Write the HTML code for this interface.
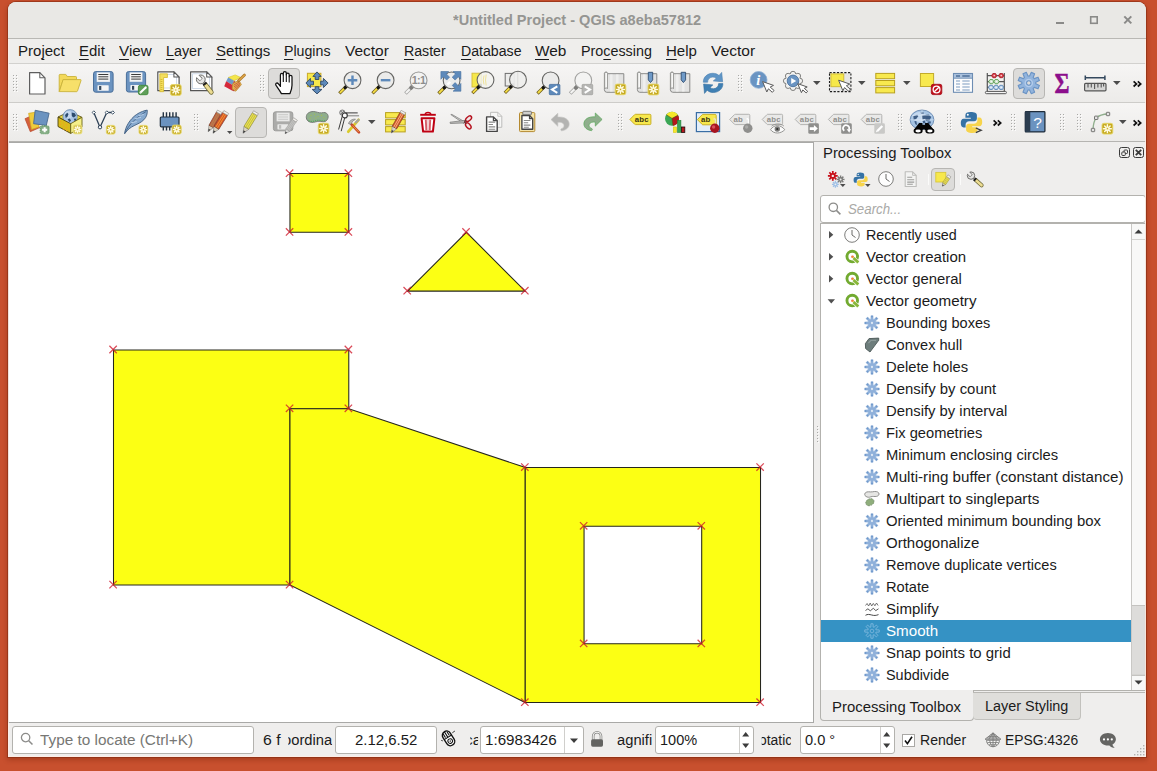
<!DOCTYPE html>
<html><head><meta charset="utf-8"><title>QGIS</title><style>
html,body{margin:0;padding:0}
body{width:1157px;height:771px;overflow:hidden;position:relative;background:#c8502e;font-family:"Liberation Sans", sans-serif}
.t{position:absolute;white-space:pre;line-height:20px;height:20px;transform-origin:0 50%}
u{text-decoration:none;border-bottom:1.3px solid #1b1b1b;padding-bottom:0px}
</style></head><body>
<div style="position:absolute;left:8px;top:2px;width:1138px;height:755px;background:#efeeed;border-radius:8px 8px 0 0;box-shadow:0 0 0 1px rgba(120,35,10,.45),0 2px 5px 1px rgba(100,25,0,.32);overflow:hidden"></div>
<div style="position:absolute;left:8px;top:2px;width:1138px;height:36px;background:#e9e8e5;border-radius:8px 8px 0 0;border-bottom:1px solid #b9b8b4"></div>
<svg style="position:absolute;left:1050px;top:8px" width="90" height="24" viewBox="0 0 90 24"><g stroke="#8a8a88" stroke-width="2" fill="none"><path d="M6 15h8"/><rect x="40.700" y="8.800" width="6.500" height="6.500" stroke-width="1.600"/><path d="M74.300 8.400l7 7M81.300 8.400l-7 7"/></g></svg>
<div style="position:absolute;left:8px;top:39px;width:1138px;height:24px;background:#efeeec;border-bottom:1px solid #d2d1ce"></div>
<div style="position:absolute;left:8px;top:64px;width:1138px;height:38px;background:linear-gradient(#f6f5f4,#ecebe9);border-bottom:1px solid #cdccc9"></div>
<div style="position:absolute;left:8px;top:103px;width:1138px;height:38px;background:linear-gradient(#f6f5f4,#ecebe9)"></div>
<div style="position:absolute;left:8px;top:141px;width:806px;height:582px;background:#a9a9a7"></div>
<div style="position:absolute;left:9px;top:143px;width:804px;height:579px;background:#fff"></div>
<svg style="position:absolute;left:9px;top:143px" width="804" height="579" viewBox="0 0 804 579"><path d="M280.96 30.56 L339.78 30.56 L339.78 89.34 L280.96 89.34 Z" fill="#fcff14" fill-rule="evenodd" stroke="#26261c" stroke-width="1.05"/><path d="M398.60 148.12 L457.42 89.34 L516.24 148.12 Z" fill="#fcff14" fill-rule="evenodd" stroke="#26261c" stroke-width="1.05"/><path d="M104.50 206.90 L339.78 206.90 L339.78 265.68 L280.96 265.68 L280.96 442.02 L104.50 442.02 Z" fill="#fcff14" fill-rule="evenodd" stroke="#26261c" stroke-width="1.05"/><path d="M280.96 265.68 L339.78 265.68 L516.24 324.46 L516.24 559.58 L280.96 442.02 Z" fill="#fcff14" fill-rule="evenodd" stroke="#26261c" stroke-width="1.05"/><path d="M516.24 324.46 L751.52 324.46 L751.52 559.58 L516.24 559.58 Z M575.06 383.24 L692.70 383.24 L692.70 500.80 L575.06 500.80 Z" fill="#fcff14" fill-rule="evenodd" stroke="#26261c" stroke-width="1.05"/><path d="M100.40 202.80l7.4 7.4M107.80 202.80l-7.4 7.4M100.40 437.92l7.4 7.4M107.80 437.92l-7.4 7.4M276.86 26.46l7.4 7.4M284.26 26.46l-7.4 7.4M276.86 85.24l7.4 7.4M284.26 85.24l-7.4 7.4M276.86 261.58l7.4 7.4M284.26 261.58l-7.4 7.4M276.86 437.92l7.4 7.4M284.26 437.92l-7.4 7.4M335.68 26.46l7.4 7.4M343.08 26.46l-7.4 7.4M335.68 85.24l7.4 7.4M343.08 85.24l-7.4 7.4M335.68 202.80l7.4 7.4M343.08 202.80l-7.4 7.4M335.68 261.58l7.4 7.4M343.08 261.58l-7.4 7.4M394.50 144.02l7.4 7.4M401.90 144.02l-7.4 7.4M453.32 85.24l7.4 7.4M460.72 85.24l-7.4 7.4M512.14 144.02l7.4 7.4M519.54 144.02l-7.4 7.4M512.14 320.36l7.4 7.4M519.54 320.36l-7.4 7.4M512.14 555.48l7.4 7.4M519.54 555.48l-7.4 7.4M570.96 379.14l7.4 7.4M578.36 379.14l-7.4 7.4M570.96 496.70l7.4 7.4M578.36 496.70l-7.4 7.4M688.60 379.14l7.4 7.4M696.00 379.14l-7.4 7.4M688.60 496.70l7.4 7.4M696.00 496.70l-7.4 7.4M747.42 320.36l7.4 7.4M754.82 320.36l-7.4 7.4M747.42 555.48l7.4 7.4M754.82 555.48l-7.4 7.4" stroke="#cf1a2c" stroke-opacity=".78" stroke-width="1.25" fill="none"/></svg>
<svg style="position:absolute;left:1118px;top:146px" width="28" height="14" viewBox="0 0 28 14"><g fill="none" stroke="#3a3a3a" stroke-width="1"><rect x="1.5" y="1.5" width="10" height="10" rx="2"/><rect x="15.5" y="1.5" width="10" height="10" rx="2"/><rect x="6" y="4" width="3.5" height="3.5" rx=".8"/><rect x="3.8" y="6" width="3.5" height="3.5" rx=".8" fill="#efeeed"/><path d="M17.8 3.8l5.4 5.4M23.2 3.8l-5.4 5.4" stroke-width="1.8"/></g></svg>
<div style="position:absolute;left:820px;top:195px;width:324px;height:26px;background:#fff;border:1px solid #b3b2ae;border-radius:3px"></div>
<svg style="position:absolute;left:827px;top:201px" width="16" height="16" viewBox="0 0 16 16"><circle cx="6.3" cy="6.3" r="4.2" fill="none" stroke="#8c8c8a" stroke-width="1.3"/><path d="M9.4 9.4l4 4" stroke="#8c8c8a" stroke-width="1.5"/></svg>
<div style="position:absolute;left:820px;top:223px;width:324px;height:466px;background:#fff;border:1px solid #b3b2ae"></div>
<div style="position:absolute;left:821px;top:620px;width:310px;height:22px;background:#3592c4"></div>
<div style="position:absolute;left:1131px;top:224px;width:14px;height:466px;background:#f8f8f7;border-left:1px solid #c9c8c5;width:13px"></div>
<div style="position:absolute;left:1132px;top:605px;width:13px;height:71px;background:#dddcda;border-top:1px solid #c4c3c0;border-bottom:1px solid #c4c3c0;height:69px"></div>
<svg style="position:absolute;left:1132px;top:224px" width="13" height="466" viewBox="0 0 13 466"><path d="M2.5 9.5h8L6.5 5.5z M2.5 456.5h8l-4 4z" fill="#3c3c3c"/><path d="M0 15.5h13M0 450.5h13" stroke="#d5d4d1"/></svg>
<svg style="position:absolute;left:0;top:0" width="1157" height="771" viewBox="0 0 1157 771"><path d="M829 231.1l4.300 3.700l-4.300 3.700zM829 253.1l4.300 3.700l-4.300 3.700zM829 275.1l4.300 3.700l-4.300 3.700zM827.600 299.200h7.400l-3.700 4.200z" fill="#505050"/></svg>
<div style="position:absolute;left:820px;top:690px;width:153px;height:31px;background:#efeeed;border:1px solid #b3b2ae;border-top:none;border-radius:0 0 4px 4px;height:30px;width:152px"></div>
<div style="position:absolute;left:973px;top:692px;width:108px;height:27px;background:#dfdedb;border:1px solid #c2c1bd;border-top:1px solid #b9b8b4;border-left:none;border-radius:0 0 4px 4px;width:107px;height:26px"></div>
<div style="position:absolute;left:12px;top:726px;width:240px;height:26px;background:#fff;border:1px solid #b3b2ae;border-radius:3px"></div>
<svg style="position:absolute;left:19px;top:731px" width="16" height="16" viewBox="0 0 16 16"><circle cx="6.6" cy="6.6" r="4.2" fill="none" stroke="#8c8c8a" stroke-width="1.3"/><path d="M9.7 9.7l3.8 3.8" stroke="#8c8c8a" stroke-width="1.5"/></svg>
<div style="position:absolute;left:335px;top:726px;width:100px;height:26px;background:#fff;border:1px solid #b3b2ae;border-radius:3px"></div>
<div style="position:absolute;left:480px;top:726px;width:102px;height:26px;background:#fff;border:1px solid #b3b2ae;border-radius:3px"></div>
<div style="position:absolute;left:564px;top:727px;width:1px;height:26px;background:#d0cfcc"></div>
<svg style="position:absolute;left:568px;top:734px" width="12" height="12" viewBox="0 0 12 12"><path d="M2 4.5h8l-4 4.5z" fill="#3c3c3c"/></svg>
<div style="position:absolute;left:655px;top:726px;width:97px;height:26px;background:#fff;border:1px solid #b3b2ae;border-radius:3px"></div>
<div style="position:absolute;left:739px;top:727px;width:1px;height:26px;background:#d0cfcc"></div>
<div style="position:absolute;left:800px;top:726px;width:93px;height:26px;background:#fff;border:1px solid #b3b2ae;border-radius:3px"></div>
<div style="position:absolute;left:880px;top:727px;width:1px;height:26px;background:#d0cfcc"></div>
<svg style="position:absolute;left:740px;top:727px" width="12" height="26" viewBox="0 0 12 26"><path d="M2.2 9.5h7L5.7 5z M2.2 16.5h7l-3.5 4.5z" fill="#3c3c3c"/></svg>
<svg style="position:absolute;left:881px;top:727px" width="12" height="26" viewBox="0 0 12 26"><path d="M2.2 9.5h7L5.7 5z M2.2 16.5h7l-3.5 4.5z" fill="#3c3c3c"/></svg>
<div style="position:absolute;left:902px;top:734px;width:11px;height:11px;background:#fff;border:1px solid #a9a8a5"></div>
<svg style="position:absolute;left:902px;top:734px" width="13" height="13" viewBox="0 0 13 13"><path d="M3 6.5l2.4 3.2L10 2.8" fill="none" stroke="#111" stroke-width="1.6"/></svg>
<svg style="position:absolute;left:1132.3px;top:743.4px" width="14" height="14" viewBox="0 0 14 14"><g fill="#b3b2af"><rect x="11" y="2" width="1.4" height="1.4"/><rect x="8" y="5" width="1.4" height="1.4"/><rect x="11" y="5" width="1.4" height="1.4"/><rect x="5" y="8" width="1.4" height="1.4"/><rect x="8" y="8" width="1.4" height="1.4"/><rect x="11" y="8" width="1.4" height="1.4"/><rect x="2" y="11" width="1.4" height="1.4"/><rect x="5" y="11" width="1.4" height="1.4"/><rect x="8" y="11" width="1.4" height="1.4"/><rect x="11" y="11" width="1.4" height="1.4"/></g></svg>
<div style="position:absolute;left:268px;top:68px;width:30px;height:29px;background:#dddcda;border:1px solid #b7b6b3;border-radius:4px"></div>
<div style="position:absolute;left:1013px;top:68px;width:30px;height:29px;background:#dddcda;border:1px solid #b7b6b3;border-radius:4px"></div>
<div style="position:absolute;left:235px;top:107px;width:30px;height:29px;background:#dddcda;border:1px solid #b7b6b3;border-radius:4px"></div>
<svg style="position:absolute;left:0;top:0" width="1157" height="771" viewBox="0 0 1157 771" shape-rendering="crispEdges"><rect x="14" y="76" width="1" height="1" fill="#fff" fill-opacity=".85"/><rect x="13" y="75" width="1" height="1" fill="#a9a9a7"/><rect x="17" y="76" width="1" height="1" fill="#fff" fill-opacity=".85"/><rect x="16" y="75" width="1" height="1" fill="#a9a9a7"/><rect x="14" y="79" width="1" height="1" fill="#fff" fill-opacity=".85"/><rect x="13" y="78" width="1" height="1" fill="#a9a9a7"/><rect x="17" y="79" width="1" height="1" fill="#fff" fill-opacity=".85"/><rect x="16" y="78" width="1" height="1" fill="#a9a9a7"/><rect x="14" y="82" width="1" height="1" fill="#fff" fill-opacity=".85"/><rect x="13" y="81" width="1" height="1" fill="#a9a9a7"/><rect x="17" y="82" width="1" height="1" fill="#fff" fill-opacity=".85"/><rect x="16" y="81" width="1" height="1" fill="#a9a9a7"/><rect x="14" y="85" width="1" height="1" fill="#fff" fill-opacity=".85"/><rect x="13" y="84" width="1" height="1" fill="#a9a9a7"/><rect x="17" y="85" width="1" height="1" fill="#fff" fill-opacity=".85"/><rect x="16" y="84" width="1" height="1" fill="#a9a9a7"/><rect x="14" y="88" width="1" height="1" fill="#fff" fill-opacity=".85"/><rect x="13" y="87" width="1" height="1" fill="#a9a9a7"/><rect x="17" y="88" width="1" height="1" fill="#fff" fill-opacity=".85"/><rect x="16" y="87" width="1" height="1" fill="#a9a9a7"/><rect x="14" y="91" width="1" height="1" fill="#fff" fill-opacity=".85"/><rect x="13" y="90" width="1" height="1" fill="#a9a9a7"/><rect x="17" y="91" width="1" height="1" fill="#fff" fill-opacity=".85"/><rect x="16" y="90" width="1" height="1" fill="#a9a9a7"/></svg>
<svg style="position:absolute;left:0;top:0" width="1157" height="771" viewBox="0 0 1157 771" shape-rendering="crispEdges"><rect x="261" y="76" width="1" height="1" fill="#fff" fill-opacity=".85"/><rect x="260" y="75" width="1" height="1" fill="#a9a9a7"/><rect x="264" y="76" width="1" height="1" fill="#fff" fill-opacity=".85"/><rect x="263" y="75" width="1" height="1" fill="#a9a9a7"/><rect x="261" y="79" width="1" height="1" fill="#fff" fill-opacity=".85"/><rect x="260" y="78" width="1" height="1" fill="#a9a9a7"/><rect x="264" y="79" width="1" height="1" fill="#fff" fill-opacity=".85"/><rect x="263" y="78" width="1" height="1" fill="#a9a9a7"/><rect x="261" y="82" width="1" height="1" fill="#fff" fill-opacity=".85"/><rect x="260" y="81" width="1" height="1" fill="#a9a9a7"/><rect x="264" y="82" width="1" height="1" fill="#fff" fill-opacity=".85"/><rect x="263" y="81" width="1" height="1" fill="#a9a9a7"/><rect x="261" y="85" width="1" height="1" fill="#fff" fill-opacity=".85"/><rect x="260" y="84" width="1" height="1" fill="#a9a9a7"/><rect x="264" y="85" width="1" height="1" fill="#fff" fill-opacity=".85"/><rect x="263" y="84" width="1" height="1" fill="#a9a9a7"/><rect x="261" y="88" width="1" height="1" fill="#fff" fill-opacity=".85"/><rect x="260" y="87" width="1" height="1" fill="#a9a9a7"/><rect x="264" y="88" width="1" height="1" fill="#fff" fill-opacity=".85"/><rect x="263" y="87" width="1" height="1" fill="#a9a9a7"/><rect x="261" y="91" width="1" height="1" fill="#fff" fill-opacity=".85"/><rect x="260" y="90" width="1" height="1" fill="#a9a9a7"/><rect x="264" y="91" width="1" height="1" fill="#fff" fill-opacity=".85"/><rect x="263" y="90" width="1" height="1" fill="#a9a9a7"/></svg>
<svg style="position:absolute;left:0;top:0" width="1157" height="771" viewBox="0 0 1157 771" shape-rendering="crispEdges"><rect x="739" y="76" width="1" height="1" fill="#fff" fill-opacity=".85"/><rect x="738" y="75" width="1" height="1" fill="#a9a9a7"/><rect x="742" y="76" width="1" height="1" fill="#fff" fill-opacity=".85"/><rect x="741" y="75" width="1" height="1" fill="#a9a9a7"/><rect x="739" y="79" width="1" height="1" fill="#fff" fill-opacity=".85"/><rect x="738" y="78" width="1" height="1" fill="#a9a9a7"/><rect x="742" y="79" width="1" height="1" fill="#fff" fill-opacity=".85"/><rect x="741" y="78" width="1" height="1" fill="#a9a9a7"/><rect x="739" y="82" width="1" height="1" fill="#fff" fill-opacity=".85"/><rect x="738" y="81" width="1" height="1" fill="#a9a9a7"/><rect x="742" y="82" width="1" height="1" fill="#fff" fill-opacity=".85"/><rect x="741" y="81" width="1" height="1" fill="#a9a9a7"/><rect x="739" y="85" width="1" height="1" fill="#fff" fill-opacity=".85"/><rect x="738" y="84" width="1" height="1" fill="#a9a9a7"/><rect x="742" y="85" width="1" height="1" fill="#fff" fill-opacity=".85"/><rect x="741" y="84" width="1" height="1" fill="#a9a9a7"/><rect x="739" y="88" width="1" height="1" fill="#fff" fill-opacity=".85"/><rect x="738" y="87" width="1" height="1" fill="#a9a9a7"/><rect x="742" y="88" width="1" height="1" fill="#fff" fill-opacity=".85"/><rect x="741" y="87" width="1" height="1" fill="#a9a9a7"/><rect x="739" y="91" width="1" height="1" fill="#fff" fill-opacity=".85"/><rect x="738" y="90" width="1" height="1" fill="#a9a9a7"/><rect x="742" y="91" width="1" height="1" fill="#fff" fill-opacity=".85"/><rect x="741" y="90" width="1" height="1" fill="#a9a9a7"/></svg>
<svg style="position:absolute;left:25px;top:71px;overflow:visible" width="24" height="24" viewBox="0 0 24 24"><path d="M4.6 1.6h10.2l5.2 5.2v16.2h-15.4z" fill="#fff" stroke="#5e5e5e" stroke-width="1.2" stroke-linejoin="round"/><path d="M14.8 1.6v5.2h5.2" fill="none" stroke="#5e5e5e" stroke-width="1.02" stroke-linejoin="round"/></svg>
<svg style="position:absolute;left:58px;top:71px;overflow:visible" width="24" height="24" viewBox="0 0 24 24"><path d="M1.2 20.5V4.2q0-.8.8-.8h5.4q.7 0 1 .6l.7 1.5h8.6q.8 0 .8.8v2.2H5.2L1.2 20.5z" fill="#f3d95a" stroke="#c9b23a" stroke-width=".9" stroke-linejoin="round"/><path d="M1.3 20.6L5.1 8.6h17.3q.9 0 .6.9l-3.5 10.4q-.3.8-1.1.8z" fill="#f7e06a" stroke="#c9b23a" stroke-width=".9" stroke-linejoin="round"/></svg>
<svg style="position:absolute;left:91px;top:71px;overflow:visible" width="24" height="24" viewBox="0 0 24 24"><rect x="2.5" y="0.6" width="19.6" height="20.6" rx="2.2" fill="#6b93c0" stroke="#4a6f9a" stroke-width="1"/><rect x="5.7" y="1.4" width="13.200000000000001" height="9.48" fill="#f4f4f4"/><path d="M7.3 3.5h10.000000000000002M7.3 5.8h10.000000000000002M7.3 8.1h10.000000000000002" stroke="#3a3a3a" stroke-width="1"/><rect x="6.5" y="14.20" width="11.200000000000001" height="5.56" rx=".6" fill="#f4f4f4"/><rect x="8.1" y="15.02" width="2.2" height="3.91" fill="#34465a"/></svg>
<svg style="position:absolute;left:124px;top:71px;overflow:visible" width="24" height="24" viewBox="0 0 24 24"><rect x="2.4" y="0.6" width="19.2" height="20.4" rx="2.2" fill="#6b93c0" stroke="#4a6f9a" stroke-width="1"/><rect x="5.6" y="1.4" width="12.799999999999999" height="9.38" fill="#f4f4f4"/><path d="M7.199999999999999 3.5h9.6M7.199999999999999 5.8h9.6M7.199999999999999 8.1h9.6" stroke="#3a3a3a" stroke-width="1"/><rect x="6.4" y="14.06" width="10.799999999999999" height="5.51" rx=".6" fill="#f4f4f4"/><rect x="8.0" y="14.88" width="2.2" height="3.88" fill="#34465a"/><rect x="14.4" y="14.3" width="9.6" height="9.4" rx="1.8" fill="#5f9e58" stroke="#3f8a3a" stroke-width=".9"/><path d="M16.5 21.6l5.2-5.2" stroke="#fff" stroke-width="2.1" stroke-linecap="round"/><path d="M16 22.2l.4-1.500 1.100 1.100z" fill="#dfe9dd"/></svg>
<svg style="position:absolute;left:157px;top:71px;overflow:visible" width="24" height="24" viewBox="0 0 24 24"><path d="M0.8 0.9h16.1l5.2 5.2v13.600000000000001h-21.3z" fill="#fff" stroke="#555" stroke-width="1.2" stroke-linejoin="round"/><rect x="3.600" y="3.600" width="15.800" height="13.400" fill="none" stroke="#c5d3e4" stroke-width=".8"/><path d="M16.900000000000002 0.9v5.2h5.2z" fill="#fff" stroke="#555" stroke-width="1.02" stroke-linejoin="round"/><path d="M2.8 2.800h7.600v3.700h-3.800v14.200h-3.800z" fill="#f5df5e" stroke="#d3b92f" stroke-width=".8"/><path d="M3.600 8.500h1.800M3.600 10.500h1.800M3.600 12.500h1.800M3.600 14.500h1.800M3.600 16.500h1.800M3.600 18.500h1.800" stroke="#c9ab25" stroke-width=".7"/><rect x="13.4" y="13.6" width="10.8" height="10.8" rx="1.8" fill="#c6aa22" stroke="#e6d768" stroke-width=".9"/><path d="M19.90 19.00L22.69 19.00M19.58 19.78L21.55 21.75M18.80 20.10L18.80 22.89M18.02 19.78L16.05 21.75M17.70 19.00L14.91 19.00M18.02 18.22L16.05 16.25M18.80 17.90L18.80 15.11M19.58 18.22L21.55 16.25" stroke="#fffbe0" stroke-width="1.5" stroke-linecap="round"/><circle cx="18.8" cy="19.0" r="1.1" fill="#c6aa22" stroke="#fffbe0" stroke-width=".7"/></svg>
<svg style="position:absolute;left:190px;top:71px;overflow:visible" width="24" height="24" viewBox="0 0 24 24"><path d="M0.6 0.9h16.1l5.2 5.2v13.600000000000001h-21.3z" fill="#fff" stroke="#555" stroke-width="1.2" stroke-linejoin="round"/><rect x="2.600" y="2.800" width="16.800" height="14.800" fill="none" stroke="#c3d1e3" stroke-width=".8"/><path d="M16.700000000000003 0.9v5.2h5.2z" fill="#fff" stroke="#555" stroke-width="1.02" stroke-linejoin="round"/><path d="M15.48 13.74L21.30 21.30" stroke="#6f6a3a" stroke-width="4.7" stroke-linecap="round"/><path d="M15.48 13.74L21.30 21.30" stroke="#ecdc92" stroke-width="3.2" stroke-linecap="round"/><path d="M13.29 10.89L14.26 12.16" stroke="#9a9a98" stroke-width="3.6"/><path d="M14.26 12.16L15.48 13.74" stroke="#1f1f1f" stroke-width="4.4"/><circle cx="10.8" cy="8.4" r="4.4" fill="#e6e6e5" stroke="#6c6c6a" stroke-width="1"/><path d="M11.22 8.82L8.04 5.64" stroke="#6c6c6a" stroke-width="4.2"/><path d="M10.87 8.47L6.63 4.23" stroke="#fff" stroke-width="2.7"/></svg>
<svg style="position:absolute;left:223px;top:71px;overflow:visible" width="24" height="24" viewBox="0 0 24 24"><path d="M5.200 6.500l7-2.600 5.600 2.600-6.800 3.200z" fill="#f4e64a" stroke="#d8c62c" stroke-width=".6"/><path d="M3.200 10.200l2-3.700 5.800 3.200-1.600 4.200z" fill="#6f9ac8"/><path d="M1.200 15.200l2-5 6.200 3.700-.4 5.600z" fill="#d5283a"/><path d="M9 19.500l.4-5.600 1.600-4.200 1.800 1.200-1.400 9.600z" fill="#c23b3b"/><path d="M9.600 12.800l6.200-3.600 2.600 4.400-5.600 6.600-3.600-2.200z" fill="#e3b451" stroke="#b98a2c" stroke-width=".7"/><path d="M10.600 14.200l5.700-3.300M11 15.800l6.100-3.800M11.600 17.300l5.600-4M12.300 18.800l4.800-4.200" stroke="#c9503a" stroke-width=".8"/><path d="M15.600 9.800l5.900-5.700" stroke="#b07a2a" stroke-width="2.800" stroke-linecap="round"/><path d="M16 9.400l5.500-5.300" stroke="#e2a94a" stroke-width="1.300" stroke-linecap="round"/></svg>
<svg style="position:absolute;left:271px;top:71px;overflow:visible" width="24" height="24" viewBox="0 0 24 24"><path d="M10.400 22.600c-1.400-2.600-3.600-5.600-5.400-8.200-1.200-1.900 1-3.300 2.400-1.600l2 2.600V3.900c0-2 2.900-2 2.900 0V2.200c0-2.100 3-2.100 3 0v1.500c0-2 2.900-2 2.900 0v2c0-1.900 2.800-1.900 2.800 0v8.600c0 3.100-.9 5.600-2 8.300z" fill="#fff" stroke="#111" stroke-width="1.250" stroke-linejoin="round"/><path d="M12.300 4v7M15.300 3.600V11M18.200 5.600V11.400" stroke="#111" stroke-width="1.100"/></svg>
<svg style="position:absolute;left:305px;top:71px;overflow:visible" width="24" height="24" viewBox="0 0 24 24"><rect x="2.400" y="2.300" width="13.500" height="13.300" fill="#f6e84a" stroke="#c9a92a" stroke-width="1"/><g fill="#5d89ba" stroke="#2f4763" stroke-width=".9" stroke-linejoin="round"><path d="M12 .9l4.100 4.500h-2.200v3.100h-3.700V5.400H7.900z"/><path d="M12 22.900l4.900-4.500h-3v-2.700h-3.700v2.700h-3z"/><path d="M.9 12l4.500-4.600v2.800h3.100v3.600H5.400v2.800z"/><path d="M23.100 12l-4.700-4.600v2.800h-2.700v3.600h2.700v2.800z"/></g></svg>
<svg style="position:absolute;left:338px;top:71px;overflow:visible" width="24" height="24" viewBox="0 0 24 24"><path d="M8.56 15.14L1.36 22.34" stroke="#6b5a1a" stroke-width="3.3" stroke-linecap="butt"/><path d="M7.96 15.74L1.86 21.84" stroke="#f4dc45" stroke-width="1.9" stroke-linecap="butt"/><path d="M9.46 14.24L6.96 16.74" stroke="#141414" stroke-width="3.1" stroke-linecap="round"/><circle cx="14.5" cy="9.2" r="8.4" fill="#ebebea" stroke="#666664" stroke-width="1.1"/><path d="M14.500 4.400v9.600M9.700 9.200h9.600" stroke="#5d89ba" stroke-width="2.400"/></svg>
<svg style="position:absolute;left:371px;top:71px;overflow:visible" width="24" height="24" viewBox="0 0 24 24"><path d="M8.66 15.14L1.46 22.34" stroke="#6b5a1a" stroke-width="3.3" stroke-linecap="butt"/><path d="M8.06 15.74L1.96 21.84" stroke="#f4dc45" stroke-width="1.9" stroke-linecap="butt"/><path d="M9.56 14.24L7.06 16.74" stroke="#141414" stroke-width="3.1" stroke-linecap="round"/><circle cx="14.6" cy="9.2" r="8.4" fill="#ebebea" stroke="#666664" stroke-width="1.1"/><path d="M9.800 9.200h9.600" stroke="#5d89ba" stroke-width="2.400"/></svg>
<svg style="position:absolute;left:404px;top:71px;overflow:visible" width="24" height="24" viewBox="0 0 24 24"><path d="M8.66 15.34L1.46 22.54" stroke="#a4a4a2" stroke-width="3.6"/><path d="M8.06 15.94L1.96 22.04" stroke="#f4f4f3" stroke-width="2.2"/><path d="M9.56 14.44L7.06 16.94" stroke="#7d7d7b" stroke-width="3.8" stroke-linecap="round"/><circle cx="14.6" cy="9.4" r="8.4" fill="#f3f3f2" stroke="#9a9a98" stroke-width="1.1"/><text x="14.500" y="13.300" font-family="Liberation Sans,sans-serif" font-weight="bold" font-size="10.800" text-anchor="middle" fill="#8e8e8c" letter-spacing="-.7">1:1</text></svg>
<svg style="position:absolute;left:437px;top:71px;overflow:visible" width="24" height="24" viewBox="0 0 24 24"><path d="M8.66 15.34L1.46 22.54" stroke="#6b5a1a" stroke-width="3.3" stroke-linecap="butt"/><path d="M8.06 15.94L1.96 22.04" stroke="#f4dc45" stroke-width="1.9" stroke-linecap="butt"/><path d="M9.56 14.44L7.06 16.94" stroke="#141414" stroke-width="3.1" stroke-linecap="round"/><circle cx="14.6" cy="9.4" r="8.4" fill="#ececeb" stroke="#666664" stroke-width="1.1"/><g fill="#5d89ba" stroke="#46709f" stroke-width=".6" stroke-linejoin="round"><path d="M3.900.5h7.800L9.300 2.900l3.300 3.300-2.900 2.900-3.300-3.300-2.500 2.500z"/><path d="M23.900.5h-7.800l2.400 2.400-3.300 3.300 2.900 2.900 3.300-3.300 2.500 2.500z"/><path d="M23.900 20.200h-7.800l2.400-2.400-3.300-3.300 2.900-2.900 3.300 3.300 2.500-2.500z"/></g><path d="M10.400 13.600l2.800-2.800" stroke="#fff" stroke-width="2.600" stroke-opacity=".9"/></svg>
<svg style="position:absolute;left:470px;top:71px;overflow:visible" width="24" height="24" viewBox="0 0 24 24"><rect x="2" y="2.200" width="9.500" height="13.800" fill="#f6e84a" stroke="#d3bb3a" stroke-width=".9"/><path d="M9.56 14.94L2.36 22.14" stroke="#6b5a1a" stroke-width="3.3" stroke-linecap="butt"/><path d="M8.96 15.54L2.86 21.64" stroke="#f4dc45" stroke-width="1.9" stroke-linecap="butt"/><path d="M10.46 14.04L7.96 16.54" stroke="#141414" stroke-width="3.1" stroke-linecap="round"/><circle cx="15.5" cy="9" r="8.4" fill="rgba(243,243,240,.86)" stroke="#666664" stroke-width="1.1"/><path d="M14 4.500q-1.500 4.500 0 9M16.200 3.500q-1.400 5.500 0 11" stroke="#efe39a" stroke-width="1" fill="none"/></svg>
<svg style="position:absolute;left:503px;top:71px;overflow:visible" width="24" height="24" viewBox="0 0 24 24"><rect x="2.200" y="2.400" width="9" height="12.600" fill="#ececeb" stroke="#6e6e6e" stroke-width="1"/><path d="M9.06 14.64L1.86 21.84" stroke="#6b5a1a" stroke-width="3.3" stroke-linecap="butt"/><path d="M8.46 15.24L2.36 21.34" stroke="#f4dc45" stroke-width="1.9" stroke-linecap="butt"/><path d="M9.96 13.74L7.46 16.24" stroke="#141414" stroke-width="3.1" stroke-linecap="round"/><circle cx="15" cy="8.7" r="8.4" fill="rgba(238,238,237,.94)" stroke="#666664" stroke-width="1.1"/><path d="M14.800 1v15.400" stroke="#dcdcdb" stroke-width="1"/></svg>
<svg style="position:absolute;left:536px;top:71px;overflow:visible" width="24" height="24" viewBox="0 0 24 24"><path d="M8.66 15.34L1.46 22.54" stroke="#6b5a1a" stroke-width="3.3" stroke-linecap="butt"/><path d="M8.06 15.94L1.96 22.04" stroke="#f4dc45" stroke-width="1.9" stroke-linecap="butt"/><path d="M9.56 14.44L7.06 16.94" stroke="#141414" stroke-width="3.1" stroke-linecap="round"/><circle cx="14.6" cy="9.4" r="8.4" fill="#ebebea" stroke="#666664" stroke-width="1.1"/><rect x="13.300" y="13.400" width="10.600" height="10.300" rx=".8" fill="#5d89ba" stroke="#46709f" stroke-width=".8"/><path d="M21.300 15.400l-5.300 3.200 5.300 3.200" fill="none" stroke="#fff" stroke-width="2"/></svg>
<svg style="position:absolute;left:569px;top:71px;overflow:visible" width="24" height="24" viewBox="0 0 24 24"><path d="M8.36 15.34L1.16 22.54" stroke="#a4a4a2" stroke-width="3.6"/><path d="M7.76 15.94L1.66 22.04" stroke="#f4f4f3" stroke-width="2.2"/><path d="M9.26 14.44L6.76 16.94" stroke="#7d7d7b" stroke-width="3.8" stroke-linecap="round"/><circle cx="14.3" cy="9.4" r="8.4" fill="#f3f3f2" stroke="#a2a2a0" stroke-width="1.1"/><rect x="13.100" y="13.400" width="10.600" height="10.300" rx=".8" fill="#b5b5b3" stroke="#a2a2a0" stroke-width=".8"/><path d="M15.700 15.400l5.300 3.200-5.300 3.200" fill="none" stroke="#fff" stroke-width="2"/></svg>
<svg style="position:absolute;left:602px;top:71px;overflow:visible" width="24" height="24" viewBox="0 0 24 24"><path d="M5.5 2.7h16.300v18.600h-17q-2.400-.2-2.400-2.600V2.3q.3-1.300 1.600-1.300t1.500 1.300z" fill="#e3e3e2" stroke="#8b8b89" stroke-width="1" stroke-linejoin="round"/><path d="M2.6999999999999997 2.5q.3-1.200 1.400-1.200t1.400 1.200v15.200q-.2-.8-1.400-.8t-1.400 1z" fill="#f7f7f6" stroke="#8b8b89" stroke-width=".8"/><path d="M9.3 3.5v17M15.3 3.5v17" stroke="#efefee" stroke-width="2.500"/><rect x="13.2" y="13.1" width="10.6" height="10.6" rx="1.8" fill="#c6aa22" stroke="#e6d768" stroke-width=".9"/><path d="M19.60 18.40L22.32 18.40M19.28 19.18L21.20 21.10M18.50 19.50L18.50 22.22M17.72 19.18L15.80 21.10M17.40 18.40L14.68 18.40M17.72 17.62L15.80 15.70M18.50 17.30L18.50 14.58M19.28 17.62L21.20 15.70" stroke="#fffbe0" stroke-width="1.5" stroke-linecap="round"/><circle cx="18.5" cy="18.4" r="1.1" fill="#c6aa22" stroke="#fffbe0" stroke-width=".7"/></svg>
<svg style="position:absolute;left:635px;top:71px;overflow:visible" width="24" height="24" viewBox="0 0 24 24"><path d="M5.5 2.7h16.300v18.600h-17q-2.400-.2-2.400-2.600V2.3q.3-1.300 1.600-1.300t1.500 1.300z" fill="#e3e3e2" stroke="#8b8b89" stroke-width="1" stroke-linejoin="round"/><path d="M2.6999999999999997 2.5q.3-1.200 1.400-1.200t1.400 1.200v15.200q-.2-.8-1.400-.8t-1.400 1z" fill="#f7f7f6" stroke="#8b8b89" stroke-width=".8"/><path d="M9.3 3.5v17M15.3 3.5v17" stroke="#efefee" stroke-width="2.500"/><path d="M13.3 1.300h4.400v7.600l-2.200 2.700-2.200-2.700z" fill="#6f9ac8" stroke="#2f4d70" stroke-width=".9" stroke-linejoin="round"/><rect x="13" y="13.1" width="10.8" height="10.8" rx="1.8" fill="#c6aa22" stroke="#e6d768" stroke-width=".9"/><path d="M19.50 18.50L22.29 18.50M19.18 19.28L21.15 21.25M18.40 19.60L18.40 22.39M17.62 19.28L15.65 21.25M17.30 18.50L14.51 18.50M17.62 17.72L15.65 15.75M18.40 17.40L18.40 14.61M19.18 17.72L21.15 15.75" stroke="#fffbe0" stroke-width="1.5" stroke-linecap="round"/><circle cx="18.4" cy="18.5" r="1.1" fill="#c6aa22" stroke="#fffbe0" stroke-width=".7"/></svg>
<svg style="position:absolute;left:668px;top:71px;overflow:visible" width="24" height="24" viewBox="0 0 24 24"><path d="M5.5 2.7h16.300v18.600h-17q-2.400-.2-2.400-2.600V2.3q.3-1.300 1.600-1.300t1.500 1.300z" fill="#e3e3e2" stroke="#8b8b89" stroke-width="1" stroke-linejoin="round"/><path d="M2.6999999999999997 2.5q.3-1.200 1.400-1.200t1.400 1.200v15.200q-.2-.8-1.400-.8t-1.400 1z" fill="#f7f7f6" stroke="#8b8b89" stroke-width=".8"/><path d="M9.3 3.5v17M15.3 3.5v17" stroke="#efefee" stroke-width="2.500"/><path d="M13.2 1.300h4.400v7.600l-2.200 2.700-2.200-2.700z" fill="#6f9ac8" stroke="#2f4d70" stroke-width=".9" stroke-linejoin="round"/></svg>
<svg style="position:absolute;left:701px;top:71px;overflow:visible" width="24" height="24" viewBox="0 0 24 24"><path d="M2.300 11.200C2.300 5.500 7 2.300 11.800 2.300c2.600 0 4.600.8 6.200 2.300l2.700-3.200.9 9.400-9.300-.9 2.900-2.500c-1-.9-2.100-1.300-3.400-1.300-3 0-5.200 2.100-5.200 5.100z" fill="#5f95c6" stroke="#4a7fb0" stroke-width=".6" stroke-linejoin="round"/><path d="M21.900 12.600c0 5.700-4.700 8.900-9.500 8.900-2.600 0-4.600-.8-6.200-2.300l-2.700 3.200-.9-9.400 9.300.9L9 16.400c1 .9 2.100 1.300 3.400 1.300 3 0 5.200-2.100 5.200-5.100z" fill="#3f80b4" stroke="#356f9f" stroke-width=".6" stroke-linejoin="round"/></svg>
<svg style="position:absolute;left:748px;top:71px;overflow:visible" width="24" height="24" viewBox="0 0 24 24"><circle cx="10.600" cy="8.900" r="8.400" fill="#6a94c2" stroke="#8fb0d4" stroke-width=".8"/><text x="10.200" y="13.800" font-family="Liberation Serif,serif" font-style="italic" font-weight="bold" font-size="14.500" text-anchor="middle" fill="#fff">i</text><path d="M14.60 10.60 L18.80 20.98 L20.44 17.84 L24.33 21.34 L26.05 19.46 L22.20 16.05 L25.51 14.39Z" fill="#fff" stroke="#5b5b5b" stroke-width="1" stroke-linejoin="round"/></svg>
<svg style="position:absolute;left:781px;top:71px;overflow:visible" width="24" height="24" viewBox="0 0 24 24"><g fill="#f1f1f0" stroke="#7f7f7d" stroke-width="1"><circle cx="18.90" cy="9.90" r="2.7"/><circle cx="16.88" cy="14.78" r="2.7"/><circle cx="12.00" cy="16.80" r="2.7"/><circle cx="7.12" cy="14.78" r="2.7"/><circle cx="5.10" cy="9.90" r="2.7"/><circle cx="7.12" cy="5.02" r="2.7"/><circle cx="12.00" cy="3.00" r="2.7"/><circle cx="16.88" cy="5.02" r="2.7"/></g><circle cx="12" cy="9.900" r="7.300" fill="#f1f1f0"/><circle cx="12" cy="9.900" r="5.800" fill="#6a94c2" stroke="#4d749f" stroke-width=".9"/><path d="M10.200 6.900l5 3-5 3z" fill="#fff"/><path d="M16.80 12.70 L20.41 21.63 L21.82 18.93 L25.17 21.93 L26.65 20.32 L23.33 17.39 L26.19 15.96Z" fill="#fff" stroke="#5b5b5b" stroke-width="1" stroke-linejoin="round"/></svg>
<svg style="position:absolute;left:828px;top:71px;overflow:visible" width="24" height="24" viewBox="0 0 24 24"><rect x="1.500" y="1.600" width="21.400" height="19" fill="#e6e6e5" stroke="#1d1d1d" stroke-width="1.100" stroke-dasharray="2.200 1.500"/><rect x="2.900" y="2.900" width="12.900" height="12.800" fill="#f6e84a" stroke="#cdb730" stroke-width=".9"/><path d="M10.60 9.20 L14.88 19.79 L16.55 16.59 L20.53 20.15 L22.28 18.23 L18.35 14.76 L21.73 13.06Z" fill="#fff" stroke="#5b5b5b" stroke-width="1" stroke-linejoin="round"/></svg>
<svg style="position:absolute;left:873px;top:71px;overflow:visible" width="24" height="24" viewBox="0 0 24 24"><rect x="2.8" y="2.4" width="18.8" height="5.300" fill="#f8e94e" stroke="#b8a01e" stroke-width="1"/><rect x="2.8" y="9.5" width="18.8" height="5.300" fill="#f8e94e" stroke="#b8a01e" stroke-width="1"/><rect x="2.8" y="16.6" width="18.8" height="5.300" fill="#f8e94e" stroke="#b8a01e" stroke-width="1"/></svg>
<svg style="position:absolute;left:918px;top:71px;overflow:visible" width="24" height="24" viewBox="0 0 24 24"><rect x="2.400" y="2.500" width="13.200" height="13" fill="#f8e94e" stroke="#c3ab2a" stroke-width="1"/><rect x="13.300" y="13.300" width="10.500" height="10.300" rx="1.800" fill="#c20f1b" stroke="#a20a14" stroke-width=".8"/><circle cx="18.550" cy="18.450" r="3.400" fill="none" stroke="#fff" stroke-width="1.300"/><path d="M16.300 20.800l4.600-4.600" stroke="#fff" stroke-width="1.300"/></svg>
<svg style="position:absolute;left:951px;top:71px;overflow:visible" width="24" height="24" viewBox="0 0 24 24"><rect x="2.500" y="2.500" width="19" height="18.800" fill="#fdfdfd" stroke="#6d8db3" stroke-width="1.100"/><rect x="3" y="3" width="18" height="3.900" fill="#a9c0dc"/><path d="M2.500 7.200h19" stroke="#6d8db3" stroke-width="1"/><path d="M5 5h4M11.300 5h7.400" stroke="#4d6f98" stroke-width="1.400"/><path d="M5 10h4M11.300 10h7.400M5 13h4M11.300 13h7.400M5 16h4M11.300 16h7.400M5 19h4M11.300 19h7.400" stroke="#7d9bbf" stroke-width="1.200"/></svg>
<svg style="position:absolute;left:984px;top:71px;overflow:visible" width="24" height="24" viewBox="0 0 24 24"><path d="M3.300 2v18.600M20.300 2v18.600M3.300 4.600h17M3.300 10.600h17M3.300 16.400h17" stroke="#555" stroke-width="1.200" fill="none"/><rect x="1.400" y="20.400" width="21" height="2.300" rx="1" fill="#f4f4f4" stroke="#555" stroke-width="1"/><path d="M7.6 4.6l1.300-2.100h2.600l1.300 2.100-1.300 2.100h-2.600z" fill="#d8404a" stroke="#a31621" stroke-width=".8"/><circle cx="10.2" cy="4.6" r=".8" fill="#fff" fill-opacity=".8"/><path d="M14.6 4.6l1.300-2.100h2.600l1.300 2.100-1.300 2.100h-2.600z" fill="#d8404a" stroke="#a31621" stroke-width=".8"/><circle cx="17.2" cy="4.6" r=".8" fill="#fff" fill-opacity=".8"/><path d="M4.699999999999999 10.6l1.300-2.100h2.600l1.300 2.100-1.300 2.100h-2.600z" fill="#d3e3cf" stroke="#4c9a45" stroke-width=".8"/><circle cx="7.3" cy="10.6" r=".8" fill="#fff" fill-opacity=".8"/><path d="M9.9 10.6l1.300-2.100h2.600l1.300 2.100-1.300 2.100h-2.600z" fill="#d3e3cf" stroke="#4c9a45" stroke-width=".8"/><circle cx="12.5" cy="10.6" r=".8" fill="#fff" fill-opacity=".8"/><path d="M4.4 16.4l1.300-2.100h2.600l1.300 2.100-1.300 2.100h-2.600z" fill="#b9d0ea" stroke="#4f7db0" stroke-width=".8"/><circle cx="7" cy="16.4" r=".8" fill="#fff" fill-opacity=".8"/><path d="M9.5 16.4l1.300-2.100h2.600l1.300 2.100-1.300 2.100h-2.600z" fill="#b9d0ea" stroke="#4f7db0" stroke-width=".8"/><circle cx="12.1" cy="16.4" r=".8" fill="#fff" fill-opacity=".8"/><path d="M14.6 16.4l1.300-2.100h2.600l1.300 2.100-1.300 2.100h-2.600z" fill="#b9d0ea" stroke="#4f7db0" stroke-width=".8"/><circle cx="17.2" cy="16.4" r=".8" fill="#fff" fill-opacity=".8"/></svg>
<svg style="position:absolute;left:1017px;top:71px;overflow:visible" width="24" height="24" viewBox="0 0 24 24"><path d="M18.52 10.05 L22.54 10.16 L22.54 13.84 L18.52 13.95 L17.93 15.37 L20.70 18.30 L18.10 20.90 L15.17 18.13 L13.75 18.72 L13.64 22.74 L9.96 22.74 L9.85 18.72 L8.43 18.13 L5.50 20.90 L2.90 18.30 L5.67 15.37 L5.08 13.95 L1.06 13.84 L1.06 10.16 L5.08 10.05 L5.67 8.63 L2.90 5.70 L5.50 3.10 L8.43 5.87 L9.85 5.28 L9.96 1.26 L13.64 1.26 L13.75 5.28 L15.17 5.87 L18.10 3.10 L20.70 5.70 L17.93 8.63ZM14.00 12.00A2.2 2.2 0 1 0 9.60 12.00A2.2 2.2 0 1 0 14.00 12.00Z" fill="#92b4dd" stroke="#6a93c4" stroke-width="1.100" stroke-linejoin="round" fill-rule="evenodd" transform="rotate(22.500 11.800 12)"/><circle cx="11.800" cy="12" r="3.600" fill="none" stroke="#b4cceb" stroke-width="1.300"/></svg>
<svg style="position:absolute;left:1050px;top:71px;overflow:visible" width="24" height="24" viewBox="0 0 24 24"><text x="11.900" y="22.300" font-family="Liberation Serif,serif" font-weight="bold" font-size="29.500" text-anchor="middle" fill="#8c0f8c" stroke="#8c0f8c" stroke-width=".5" textLength="15" lengthAdjust="spacingAndGlyphs">Σ</text></svg>
<svg style="position:absolute;left:1083px;top:71px;overflow:visible" width="24" height="24" viewBox="0 0 24 24"><path d="M2 6.800h20.200M2.300 4.600v4.400M21.900 4.600v4.400" stroke="#34495e" stroke-width="1.500"/><rect x="1.600" y="12.400" width="21.400" height="7.400" rx="1" fill="#d6d6d5" stroke="#555" stroke-width="1.200"/><path d="M5 13v3.400M8.300 13v3.400M11.600 13v5M14.900 13v3.400M18.200 13v3.400M20.600 13v2.500" stroke="#555" stroke-width="1.100"/></svg>
<svg style="position:absolute;left:813.3px;top:81.3px;overflow:visible" width="7.6" height="3.9" viewBox="0 0 7.6 3.9"><path d="M0 0h7.6l-3.8 3.9z" fill="#4c4c4c"/></svg>
<svg style="position:absolute;left:858.2px;top:81.3px;overflow:visible" width="7.6" height="3.9" viewBox="0 0 7.6 3.9"><path d="M0 0h7.6l-3.8 3.9z" fill="#4c4c4c"/></svg>
<svg style="position:absolute;left:903.2px;top:81.3px;overflow:visible" width="7.6" height="3.9" viewBox="0 0 7.6 3.9"><path d="M0 0h7.6l-3.8 3.9z" fill="#4c4c4c"/></svg>
<svg style="position:absolute;left:1113.2px;top:81.3px;overflow:visible" width="7.6" height="3.9" viewBox="0 0 7.6 3.9"><path d="M0 0h7.6l-3.8 3.9z" fill="#4c4c4c"/></svg>
<svg style="position:absolute;left:1132.7px;top:80.7px;overflow:visible" width="9" height="6" viewBox="0 0 9 6"><path d="M.6.300l2.900 2.600-2.900 2.600M4.800.300l2.900 2.600-2.900 2.600" fill="none" stroke="#111" stroke-width="1.700"/></svg>
<svg style="position:absolute;left:0;top:0" width="1157" height="771" viewBox="0 0 1157 771" shape-rendering="crispEdges"><rect x="14" y="115" width="1" height="1" fill="#fff" fill-opacity=".85"/><rect x="13" y="114" width="1" height="1" fill="#a9a9a7"/><rect x="17" y="115" width="1" height="1" fill="#fff" fill-opacity=".85"/><rect x="16" y="114" width="1" height="1" fill="#a9a9a7"/><rect x="14" y="118" width="1" height="1" fill="#fff" fill-opacity=".85"/><rect x="13" y="117" width="1" height="1" fill="#a9a9a7"/><rect x="17" y="118" width="1" height="1" fill="#fff" fill-opacity=".85"/><rect x="16" y="117" width="1" height="1" fill="#a9a9a7"/><rect x="14" y="121" width="1" height="1" fill="#fff" fill-opacity=".85"/><rect x="13" y="120" width="1" height="1" fill="#a9a9a7"/><rect x="17" y="121" width="1" height="1" fill="#fff" fill-opacity=".85"/><rect x="16" y="120" width="1" height="1" fill="#a9a9a7"/><rect x="14" y="124" width="1" height="1" fill="#fff" fill-opacity=".85"/><rect x="13" y="123" width="1" height="1" fill="#a9a9a7"/><rect x="17" y="124" width="1" height="1" fill="#fff" fill-opacity=".85"/><rect x="16" y="123" width="1" height="1" fill="#a9a9a7"/><rect x="14" y="127" width="1" height="1" fill="#fff" fill-opacity=".85"/><rect x="13" y="126" width="1" height="1" fill="#a9a9a7"/><rect x="17" y="127" width="1" height="1" fill="#fff" fill-opacity=".85"/><rect x="16" y="126" width="1" height="1" fill="#a9a9a7"/><rect x="14" y="130" width="1" height="1" fill="#fff" fill-opacity=".85"/><rect x="13" y="129" width="1" height="1" fill="#a9a9a7"/><rect x="17" y="130" width="1" height="1" fill="#fff" fill-opacity=".85"/><rect x="16" y="129" width="1" height="1" fill="#a9a9a7"/></svg>
<svg style="position:absolute;left:0;top:0" width="1157" height="771" viewBox="0 0 1157 771" shape-rendering="crispEdges"><rect x="195" y="115" width="1" height="1" fill="#fff" fill-opacity=".85"/><rect x="194" y="114" width="1" height="1" fill="#a9a9a7"/><rect x="198" y="115" width="1" height="1" fill="#fff" fill-opacity=".85"/><rect x="197" y="114" width="1" height="1" fill="#a9a9a7"/><rect x="195" y="118" width="1" height="1" fill="#fff" fill-opacity=".85"/><rect x="194" y="117" width="1" height="1" fill="#a9a9a7"/><rect x="198" y="118" width="1" height="1" fill="#fff" fill-opacity=".85"/><rect x="197" y="117" width="1" height="1" fill="#a9a9a7"/><rect x="195" y="121" width="1" height="1" fill="#fff" fill-opacity=".85"/><rect x="194" y="120" width="1" height="1" fill="#a9a9a7"/><rect x="198" y="121" width="1" height="1" fill="#fff" fill-opacity=".85"/><rect x="197" y="120" width="1" height="1" fill="#a9a9a7"/><rect x="195" y="124" width="1" height="1" fill="#fff" fill-opacity=".85"/><rect x="194" y="123" width="1" height="1" fill="#a9a9a7"/><rect x="198" y="124" width="1" height="1" fill="#fff" fill-opacity=".85"/><rect x="197" y="123" width="1" height="1" fill="#a9a9a7"/><rect x="195" y="127" width="1" height="1" fill="#fff" fill-opacity=".85"/><rect x="194" y="126" width="1" height="1" fill="#a9a9a7"/><rect x="198" y="127" width="1" height="1" fill="#fff" fill-opacity=".85"/><rect x="197" y="126" width="1" height="1" fill="#a9a9a7"/><rect x="195" y="130" width="1" height="1" fill="#fff" fill-opacity=".85"/><rect x="194" y="129" width="1" height="1" fill="#a9a9a7"/><rect x="198" y="130" width="1" height="1" fill="#fff" fill-opacity=".85"/><rect x="197" y="129" width="1" height="1" fill="#a9a9a7"/></svg>
<svg style="position:absolute;left:0;top:0" width="1157" height="771" viewBox="0 0 1157 771" shape-rendering="crispEdges"><rect x="619" y="115" width="1" height="1" fill="#fff" fill-opacity=".85"/><rect x="618" y="114" width="1" height="1" fill="#a9a9a7"/><rect x="622" y="115" width="1" height="1" fill="#fff" fill-opacity=".85"/><rect x="621" y="114" width="1" height="1" fill="#a9a9a7"/><rect x="619" y="118" width="1" height="1" fill="#fff" fill-opacity=".85"/><rect x="618" y="117" width="1" height="1" fill="#a9a9a7"/><rect x="622" y="118" width="1" height="1" fill="#fff" fill-opacity=".85"/><rect x="621" y="117" width="1" height="1" fill="#a9a9a7"/><rect x="619" y="121" width="1" height="1" fill="#fff" fill-opacity=".85"/><rect x="618" y="120" width="1" height="1" fill="#a9a9a7"/><rect x="622" y="121" width="1" height="1" fill="#fff" fill-opacity=".85"/><rect x="621" y="120" width="1" height="1" fill="#a9a9a7"/><rect x="619" y="124" width="1" height="1" fill="#fff" fill-opacity=".85"/><rect x="618" y="123" width="1" height="1" fill="#a9a9a7"/><rect x="622" y="124" width="1" height="1" fill="#fff" fill-opacity=".85"/><rect x="621" y="123" width="1" height="1" fill="#a9a9a7"/><rect x="619" y="127" width="1" height="1" fill="#fff" fill-opacity=".85"/><rect x="618" y="126" width="1" height="1" fill="#a9a9a7"/><rect x="622" y="127" width="1" height="1" fill="#fff" fill-opacity=".85"/><rect x="621" y="126" width="1" height="1" fill="#a9a9a7"/><rect x="619" y="130" width="1" height="1" fill="#fff" fill-opacity=".85"/><rect x="618" y="129" width="1" height="1" fill="#a9a9a7"/><rect x="622" y="130" width="1" height="1" fill="#fff" fill-opacity=".85"/><rect x="621" y="129" width="1" height="1" fill="#a9a9a7"/></svg>
<svg style="position:absolute;left:0;top:0" width="1157" height="771" viewBox="0 0 1157 771" shape-rendering="crispEdges"><rect x="899" y="115" width="1" height="1" fill="#fff" fill-opacity=".85"/><rect x="898" y="114" width="1" height="1" fill="#a9a9a7"/><rect x="902" y="115" width="1" height="1" fill="#fff" fill-opacity=".85"/><rect x="901" y="114" width="1" height="1" fill="#a9a9a7"/><rect x="899" y="118" width="1" height="1" fill="#fff" fill-opacity=".85"/><rect x="898" y="117" width="1" height="1" fill="#a9a9a7"/><rect x="902" y="118" width="1" height="1" fill="#fff" fill-opacity=".85"/><rect x="901" y="117" width="1" height="1" fill="#a9a9a7"/><rect x="899" y="121" width="1" height="1" fill="#fff" fill-opacity=".85"/><rect x="898" y="120" width="1" height="1" fill="#a9a9a7"/><rect x="902" y="121" width="1" height="1" fill="#fff" fill-opacity=".85"/><rect x="901" y="120" width="1" height="1" fill="#a9a9a7"/><rect x="899" y="124" width="1" height="1" fill="#fff" fill-opacity=".85"/><rect x="898" y="123" width="1" height="1" fill="#a9a9a7"/><rect x="902" y="124" width="1" height="1" fill="#fff" fill-opacity=".85"/><rect x="901" y="123" width="1" height="1" fill="#a9a9a7"/><rect x="899" y="127" width="1" height="1" fill="#fff" fill-opacity=".85"/><rect x="898" y="126" width="1" height="1" fill="#a9a9a7"/><rect x="902" y="127" width="1" height="1" fill="#fff" fill-opacity=".85"/><rect x="901" y="126" width="1" height="1" fill="#a9a9a7"/><rect x="899" y="130" width="1" height="1" fill="#fff" fill-opacity=".85"/><rect x="898" y="129" width="1" height="1" fill="#a9a9a7"/><rect x="902" y="130" width="1" height="1" fill="#fff" fill-opacity=".85"/><rect x="901" y="129" width="1" height="1" fill="#a9a9a7"/></svg>
<svg style="position:absolute;left:0;top:0" width="1157" height="771" viewBox="0 0 1157 771" shape-rendering="crispEdges"><rect x="948" y="115" width="1" height="1" fill="#fff" fill-opacity=".85"/><rect x="947" y="114" width="1" height="1" fill="#a9a9a7"/><rect x="951" y="115" width="1" height="1" fill="#fff" fill-opacity=".85"/><rect x="950" y="114" width="1" height="1" fill="#a9a9a7"/><rect x="948" y="118" width="1" height="1" fill="#fff" fill-opacity=".85"/><rect x="947" y="117" width="1" height="1" fill="#a9a9a7"/><rect x="951" y="118" width="1" height="1" fill="#fff" fill-opacity=".85"/><rect x="950" y="117" width="1" height="1" fill="#a9a9a7"/><rect x="948" y="121" width="1" height="1" fill="#fff" fill-opacity=".85"/><rect x="947" y="120" width="1" height="1" fill="#a9a9a7"/><rect x="951" y="121" width="1" height="1" fill="#fff" fill-opacity=".85"/><rect x="950" y="120" width="1" height="1" fill="#a9a9a7"/><rect x="948" y="124" width="1" height="1" fill="#fff" fill-opacity=".85"/><rect x="947" y="123" width="1" height="1" fill="#a9a9a7"/><rect x="951" y="124" width="1" height="1" fill="#fff" fill-opacity=".85"/><rect x="950" y="123" width="1" height="1" fill="#a9a9a7"/><rect x="948" y="127" width="1" height="1" fill="#fff" fill-opacity=".85"/><rect x="947" y="126" width="1" height="1" fill="#a9a9a7"/><rect x="951" y="127" width="1" height="1" fill="#fff" fill-opacity=".85"/><rect x="950" y="126" width="1" height="1" fill="#a9a9a7"/><rect x="948" y="130" width="1" height="1" fill="#fff" fill-opacity=".85"/><rect x="947" y="129" width="1" height="1" fill="#a9a9a7"/><rect x="951" y="130" width="1" height="1" fill="#fff" fill-opacity=".85"/><rect x="950" y="129" width="1" height="1" fill="#a9a9a7"/></svg>
<svg style="position:absolute;left:0;top:0" width="1157" height="771" viewBox="0 0 1157 771" shape-rendering="crispEdges"><rect x="1012" y="115" width="1" height="1" fill="#fff" fill-opacity=".85"/><rect x="1011" y="114" width="1" height="1" fill="#a9a9a7"/><rect x="1015" y="115" width="1" height="1" fill="#fff" fill-opacity=".85"/><rect x="1014" y="114" width="1" height="1" fill="#a9a9a7"/><rect x="1012" y="118" width="1" height="1" fill="#fff" fill-opacity=".85"/><rect x="1011" y="117" width="1" height="1" fill="#a9a9a7"/><rect x="1015" y="118" width="1" height="1" fill="#fff" fill-opacity=".85"/><rect x="1014" y="117" width="1" height="1" fill="#a9a9a7"/><rect x="1012" y="121" width="1" height="1" fill="#fff" fill-opacity=".85"/><rect x="1011" y="120" width="1" height="1" fill="#a9a9a7"/><rect x="1015" y="121" width="1" height="1" fill="#fff" fill-opacity=".85"/><rect x="1014" y="120" width="1" height="1" fill="#a9a9a7"/><rect x="1012" y="124" width="1" height="1" fill="#fff" fill-opacity=".85"/><rect x="1011" y="123" width="1" height="1" fill="#a9a9a7"/><rect x="1015" y="124" width="1" height="1" fill="#fff" fill-opacity=".85"/><rect x="1014" y="123" width="1" height="1" fill="#a9a9a7"/><rect x="1012" y="127" width="1" height="1" fill="#fff" fill-opacity=".85"/><rect x="1011" y="126" width="1" height="1" fill="#a9a9a7"/><rect x="1015" y="127" width="1" height="1" fill="#fff" fill-opacity=".85"/><rect x="1014" y="126" width="1" height="1" fill="#a9a9a7"/><rect x="1012" y="130" width="1" height="1" fill="#fff" fill-opacity=".85"/><rect x="1011" y="129" width="1" height="1" fill="#a9a9a7"/><rect x="1015" y="130" width="1" height="1" fill="#fff" fill-opacity=".85"/><rect x="1014" y="129" width="1" height="1" fill="#a9a9a7"/></svg>
<svg style="position:absolute;left:0;top:0" width="1157" height="771" viewBox="0 0 1157 771" shape-rendering="crispEdges"><rect x="1061" y="115" width="1" height="1" fill="#fff" fill-opacity=".85"/><rect x="1060" y="114" width="1" height="1" fill="#a9a9a7"/><rect x="1064" y="115" width="1" height="1" fill="#fff" fill-opacity=".85"/><rect x="1063" y="114" width="1" height="1" fill="#a9a9a7"/><rect x="1061" y="118" width="1" height="1" fill="#fff" fill-opacity=".85"/><rect x="1060" y="117" width="1" height="1" fill="#a9a9a7"/><rect x="1064" y="118" width="1" height="1" fill="#fff" fill-opacity=".85"/><rect x="1063" y="117" width="1" height="1" fill="#a9a9a7"/><rect x="1061" y="121" width="1" height="1" fill="#fff" fill-opacity=".85"/><rect x="1060" y="120" width="1" height="1" fill="#a9a9a7"/><rect x="1064" y="121" width="1" height="1" fill="#fff" fill-opacity=".85"/><rect x="1063" y="120" width="1" height="1" fill="#a9a9a7"/><rect x="1061" y="124" width="1" height="1" fill="#fff" fill-opacity=".85"/><rect x="1060" y="123" width="1" height="1" fill="#a9a9a7"/><rect x="1064" y="124" width="1" height="1" fill="#fff" fill-opacity=".85"/><rect x="1063" y="123" width="1" height="1" fill="#a9a9a7"/><rect x="1061" y="127" width="1" height="1" fill="#fff" fill-opacity=".85"/><rect x="1060" y="126" width="1" height="1" fill="#a9a9a7"/><rect x="1064" y="127" width="1" height="1" fill="#fff" fill-opacity=".85"/><rect x="1063" y="126" width="1" height="1" fill="#a9a9a7"/><rect x="1061" y="130" width="1" height="1" fill="#fff" fill-opacity=".85"/><rect x="1060" y="129" width="1" height="1" fill="#a9a9a7"/><rect x="1064" y="130" width="1" height="1" fill="#fff" fill-opacity=".85"/><rect x="1063" y="129" width="1" height="1" fill="#a9a9a7"/></svg>
<svg style="position:absolute;left:0;top:0" width="1157" height="771" viewBox="0 0 1157 771" shape-rendering="crispEdges"><rect x="1078" y="115" width="1" height="1" fill="#fff" fill-opacity=".85"/><rect x="1077" y="114" width="1" height="1" fill="#a9a9a7"/><rect x="1081" y="115" width="1" height="1" fill="#fff" fill-opacity=".85"/><rect x="1080" y="114" width="1" height="1" fill="#a9a9a7"/><rect x="1078" y="118" width="1" height="1" fill="#fff" fill-opacity=".85"/><rect x="1077" y="117" width="1" height="1" fill="#a9a9a7"/><rect x="1081" y="118" width="1" height="1" fill="#fff" fill-opacity=".85"/><rect x="1080" y="117" width="1" height="1" fill="#a9a9a7"/><rect x="1078" y="121" width="1" height="1" fill="#fff" fill-opacity=".85"/><rect x="1077" y="120" width="1" height="1" fill="#a9a9a7"/><rect x="1081" y="121" width="1" height="1" fill="#fff" fill-opacity=".85"/><rect x="1080" y="120" width="1" height="1" fill="#a9a9a7"/><rect x="1078" y="124" width="1" height="1" fill="#fff" fill-opacity=".85"/><rect x="1077" y="123" width="1" height="1" fill="#a9a9a7"/><rect x="1081" y="124" width="1" height="1" fill="#fff" fill-opacity=".85"/><rect x="1080" y="123" width="1" height="1" fill="#a9a9a7"/><rect x="1078" y="127" width="1" height="1" fill="#fff" fill-opacity=".85"/><rect x="1077" y="126" width="1" height="1" fill="#a9a9a7"/><rect x="1081" y="127" width="1" height="1" fill="#fff" fill-opacity=".85"/><rect x="1080" y="126" width="1" height="1" fill="#a9a9a7"/><rect x="1078" y="130" width="1" height="1" fill="#fff" fill-opacity=".85"/><rect x="1077" y="129" width="1" height="1" fill="#a9a9a7"/><rect x="1081" y="130" width="1" height="1" fill="#fff" fill-opacity=".85"/><rect x="1080" y="129" width="1" height="1" fill="#a9a9a7"/></svg>
<svg style="position:absolute;left:25px;top:110px;overflow:visible" width="24" height="24" viewBox="0 0 24 24"><path d="M0 8.700l5-2.200 9.700 11.100-9.400 4.100z" fill="#d4603c" stroke="#b8482a" stroke-width=".7" stroke-linejoin="round"/><path d="M3.600 3.300l8.400-1.300 2 15-7.500 2.500z" fill="#f0cb3c" stroke="#cfa822" stroke-width=".7" stroke-linejoin="round"/><path d="M10.200.300l13.900 2.900-2.800 12.200-12.700-1.700z" fill="#6b93c0" stroke="#48698f" stroke-width=".9" stroke-linejoin="round"/><rect x="15.200" y="15.800" width="8.900" height="8" rx="1.600" fill="#86ad86" stroke="#4f9353" stroke-width=".8" stroke-dasharray="1.200 .8"/><path d="M19.650 17.300v5M17.100 19.800h5.100" stroke="#fff" stroke-width="2"/></svg>
<svg style="position:absolute;left:58px;top:110px;overflow:visible" width="24" height="24" viewBox="0 0 24 24"><path d="M0 7L11.500 1.500 24 7.300 12.700 13.700z" fill="#e9d640" stroke="#4a4210" stroke-width=".8" stroke-linejoin="round"/><circle cx="12.100" cy="6.800" r="7.200" fill="#a9c4e4" stroke="#5f7fa6" stroke-width=".7"/><circle cx="10.500" cy="4.800" r="3.800" fill="#d0e0f2" fill-opacity=".7"/><path d="M7 5l2.200-2.200 1.300 1.200-1 2.800-1.700 1.200zM13.600 2.600l3.200.6 1.200 2.600-2.200 1.700-2-1.300zM9.600 9.200l2.200-.8 1.300 2.400-1.800 1.200zM15.800 8.800l2-.4.600 1.800-1.600 1.400z" fill="#2b4a6e"/><path d="M0 7l12.700 6.700v9.700L0 16.500z" fill="#d9bb1c" stroke="#4a4210" stroke-width=".9" stroke-linejoin="round"/><path d="M12.700 13.700L24 7.300V17l-11.300 6.400z" fill="#f5f08a" stroke="#6b6414" stroke-width=".9" stroke-linejoin="round"/><path d="M2.600 11.400l.1.050M5.600 13l.1.050M8.600 14.600l.1.050M2.600 14.400l.1.050M5.600 16l.1.050M8.600 17.600l.1.050M5.600 19l.1.050M8.600 20.600l.1.050" stroke="#f2a21e" stroke-width="1.300" stroke-linecap="round"/><rect x="15.2" y="15.1" width="8.7" height="8.7" rx="1.8" fill="#d3c042" stroke="#e9df7a" stroke-width=".9"/><path d="M20.65 19.45L22.68 19.45M20.33 20.23L21.76 21.66M19.55 20.55L19.55 22.58M18.77 20.23L17.34 21.66M18.45 19.45L16.42 19.45M18.77 18.67L17.34 17.24M19.55 18.35L19.55 16.32M20.33 18.67L21.76 17.24" stroke="#fffbe0" stroke-width="1.5" stroke-linecap="round"/><circle cx="19.549999999999997" cy="19.45" r="1.1" fill="#d3c042" stroke="#fffbe0" stroke-width=".7"/></svg>
<svg style="position:absolute;left:91px;top:110px;overflow:visible" width="24" height="24" viewBox="0 0 24 24"><path d="M2.800 2.500L9 17.200 15.800 2.500h6.200" fill="none" stroke="#2f4257" stroke-width="1.300" stroke-linejoin="round"/><path d="M1.0999999999999999 2.5l1.7-1.7 1.7 1.7-1.7 1.7z" fill="#fff" stroke="#34495e" stroke-width=".9"/><path d="M14.100000000000001 2.5l1.7-1.7 1.7 1.7-1.7 1.7z" fill="#fff" stroke="#34495e" stroke-width=".9"/><path d="M20.1 2.5l1.7-1.7 1.7 1.7-1.7 1.7z" fill="#fff" stroke="#34495e" stroke-width=".9"/><circle cx="9" cy="17.200" r="1.700" fill="#fff" stroke="#2f4257" stroke-width="1"/><rect x="15.4" y="15.4" width="8.7" height="8.7" rx="1.8" fill="#c6aa22" stroke="#e6d768" stroke-width=".9"/><path d="M20.85 19.75L22.88 19.75M20.53 20.53L21.96 21.96M19.75 20.85L19.75 22.88M18.97 20.53L17.54 21.96M18.65 19.75L16.62 19.75M18.97 18.97L17.54 17.54M19.75 18.65L19.75 16.62M20.53 18.97L21.96 17.54" stroke="#fffbe0" stroke-width="1.5" stroke-linecap="round"/><circle cx="19.75" cy="19.75" r="1.1" fill="#c6aa22" stroke="#fffbe0" stroke-width=".7"/></svg>
<svg style="position:absolute;left:124px;top:110px;overflow:visible" width="24" height="24" viewBox="0 0 24 24"><path d="M.6 23.800C1.200 17 6 9 12.500 4.500 16.500 1.800 20.500.600 23.200.100c.4 3.500-.6 6.900-3.400 9.700-2.600 2.600-5.800 4-9.600 5.800-3.300 1.600-6.900 4-9.600 8.200z" fill="#86a9cf" stroke="#3d5c80" stroke-width=".9" stroke-linejoin="round"/><path d="M1.200 22.600C5 14.500 12 7.500 22 1.600" fill="none" stroke="#3d5c80" stroke-width=".8"/><path d="M7 12.800l5.800-1.200M10.500 8.800l6.500-1.400M14.500 5.600l5.300-1.100" stroke="#b8cfe8" stroke-width="1"/><rect x="15" y="15.4" width="8.7" height="8.7" rx="1.8" fill="#c6aa22" stroke="#e6d768" stroke-width=".9"/><path d="M20.45 19.75L22.48 19.75M20.13 20.53L21.56 21.96M19.35 20.85L19.35 22.88M18.57 20.53L17.14 21.96M18.25 19.75L16.22 19.75M18.57 18.97L17.14 17.54M19.35 18.65L19.35 16.62M20.13 18.97L21.56 17.54" stroke="#fffbe0" stroke-width="1.5" stroke-linecap="round"/><circle cx="19.35" cy="19.75" r="1.1" fill="#c6aa22" stroke="#fffbe0" stroke-width=".7"/></svg>
<svg style="position:absolute;left:157px;top:110px;overflow:visible" width="24" height="24" viewBox="0 0 24 24"><path d="M6.3 2.300v4.700M6.3 16.800v3.800M9.5 2.300v4.700M9.5 16.800v3.800M12.7 2.300v4.700M12.7 16.800v3.800M15.9 2.300v4.700M15.9 16.800v3.800M19.1 2.300v4.700M19.1 16.800v3.800" stroke="#233242" stroke-width="1.400"/><rect x="3.300" y="7" width="18.700" height="9.800" rx="1" fill="#6b93c0" stroke="#233242" stroke-width="1.200"/><rect x="15.2" y="15.1" width="9" height="9" rx="1.8" fill="#c6aa22" stroke="#e6d768" stroke-width=".9"/><path d="M20.80 19.60L22.94 19.60M20.48 20.38L21.99 21.89M19.70 20.70L19.70 22.84M18.92 20.38L17.41 21.89M18.60 19.60L16.46 19.60M18.92 18.82L17.41 17.31M19.70 18.50L19.70 16.36M20.48 18.82L21.99 17.31" stroke="#fffbe0" stroke-width="1.5" stroke-linecap="round"/><circle cx="19.7" cy="19.6" r="1.1" fill="#c6aa22" stroke="#fffbe0" stroke-width=".7"/></svg>
<svg style="position:absolute;left:205px;top:110px;overflow:visible" width="24" height="24" viewBox="0 0 24 24"><path d="M3.20 21.70L8.37 17.62L4.01 15.17Z" fill="#d9d2c0" stroke="#8a8a8a" stroke-width=".7"/><path d="M3.20 21.70L5.53 19.87L3.57 18.76Z" fill="#3d3d3d"/><path d="M8.37 17.62L15.80 4.44L11.44 1.99L4.01 15.17Z" fill="#c9603c" stroke="#7a3a22" stroke-width=".7"/><path d="M6.91 16.80L14.34 3.62M5.47 15.99L12.90 2.81" stroke="#a98a5a" stroke-width=".9"/><path d="M15.80 4.44L16.88 2.53L12.52 0.07L11.44 1.99Z" fill="#f3f1ee" stroke="#9a9894" stroke-width=".7"/><path d="M8.00 23.30L13.83 19.24L9.08 16.28Z" fill="#d9d2c0" stroke="#8a8a8a" stroke-width=".7"/><path d="M8.00 23.30L10.62 21.48L8.49 20.14Z" fill="#3d3d3d"/><path d="M13.83 19.24L22.51 5.35L17.76 2.38L9.08 16.28Z" fill="#d9532a" stroke="#7a3a22" stroke-width=".7"/><path d="M12.24 18.25L20.92 4.36M10.67 17.27L19.35 3.38" stroke="#f0a030" stroke-width=".9"/><path d="M22.51 5.35L23.68 3.48L18.92 0.52L17.76 2.38Z" fill="#f3f1ee" stroke="#9a9894" stroke-width=".7"/></svg>
<svg style="position:absolute;left:239px;top:110px;overflow:visible" width="24" height="24" viewBox="0 0 24 24"><path d="M4.00 23.30L9.76 19.28L5.00 16.35Z" fill="#d9d2c0" stroke="#8a8a8a" stroke-width=".7"/><path d="M4.00 23.30L6.59 21.49L4.45 20.17Z" fill="#3d3d3d"/><path d="M9.76 19.28L18.23 5.54L13.46 2.60L5.00 16.35Z" fill="#ebe24e" stroke="#8d8a3a" stroke-width=".7"/><path d="M8.17 18.30L16.63 4.56M6.59 17.33L15.06 3.59" stroke="#bdb845" stroke-width=".9"/><path d="M18.23 5.54L19.38 3.67L14.62 0.73L13.46 2.60Z" fill="#f3f1ee" stroke="#9a9894" stroke-width=".7"/></svg>
<svg style="position:absolute;left:272px;top:110px;overflow:visible" width="24" height="24" viewBox="0 0 24 24"><rect x="1.4" y="1.8" width="19.4" height="19" rx="2.2" fill="#ababa9" stroke="#9c9c9a" stroke-width="1"/><rect x="4.6" y="2.6" width="12.999999999999998" height="8.74" fill="#e9e9e8"/><path d="M6.199999999999999 4.7h9.799999999999999M6.199999999999999 7.0h9.799999999999999M6.199999999999999 9.3h9.799999999999999" stroke="#c9c9c7" stroke-width="1"/><rect x="5.4" y="14.34" width="10.999999999999998" height="5.13" rx=".6" fill="#e9e9e8"/><rect x="7.0" y="15.10" width="2.2" height="3.61" fill="#bdbdbb"/><path d="M13.10 23.80L17.69 21.27L13.92 18.63Z" fill="#d8d8d6" stroke="#a0a0a0" stroke-width=".7"/><path d="M13.10 23.80L15.16 22.66L13.47 21.47Z" fill="#3d3d3d"/><path d="M17.69 21.27L24.12 12.12L20.35 9.48L13.92 18.63Z" fill="#c4c4c2" stroke="#a3a3a1" stroke-width=".7"/><path d="M16.43 20.39L22.86 11.24M15.18 19.52L21.61 10.36" stroke="#b2b2b0" stroke-width=".9"/><path d="M24.12 12.12L25.38 10.32L21.62 7.68L20.35 9.48Z" fill="#f3f1ee" stroke="#9a9894" stroke-width=".7"/></svg>
<svg style="position:absolute;left:305px;top:110px;overflow:visible" width="24" height="24" viewBox="0 0 24 24"><path d="M6 1.800c3-.9 5.500.4 8.500 1 3 .6 4.800-1.400 7.200.6 2.200 1.900 1.800 5.600-.6 7.500-2.600 2-5.200-.2-8.200.4-3 .6-5.600 2-8.800.4C.800 10.100.600 5.900 2.500 3.700 3.500 2.600 4.700 2.200 6 1.800z" fill="#8fae8c" stroke="#7a7f7a" stroke-width="1"/><path d="M3.700 10.700c3 1.500 5.700.3 8.800-.4 3-.6 5.700 1.700 8.400-.2" fill="none" stroke="#3aa84a" stroke-width=".9" stroke-dasharray="1 1.200"/><path d="M6 5.400h.1M9.500 4.300h.1M13 6.500h.1M16.500 5.400h.1M19 7.600h.1M5 8.400h.1M10.800 8h.1" stroke="#a9c246" stroke-width="1" stroke-linecap="round"/><rect x="13.3" y="13.3" width="10.6" height="10.6" rx="1.8" fill="#c6aa22" stroke="#e6d768" stroke-width=".9"/><path d="M19.70 18.60L22.42 18.60M19.38 19.38L21.30 21.30M18.60 19.70L18.60 22.42M17.82 19.38L15.90 21.30M17.50 18.60L14.78 18.60M17.82 17.82L15.90 15.90M18.60 17.50L18.60 14.78M19.38 17.82L21.30 15.90" stroke="#fffbe0" stroke-width="1.5" stroke-linecap="round"/><circle cx="18.6" cy="18.6" r="1.1" fill="#c6aa22" stroke="#fffbe0" stroke-width=".7"/></svg>
<svg style="position:absolute;left:338px;top:110px;overflow:visible" width="24" height="24" viewBox="0 0 24 24"><path d="M7.300 2.900h12.400" stroke="#3a3a3a" stroke-width="1"/><path d="M8.500 5.700h12.600" stroke="#a2a2a0" stroke-width="1.500"/><path d="M4.400 5.800L0.600 19.500M7 6.600L3.200 21.200" stroke="#3a3a3a" stroke-width="1"/><circle cx="4.300" cy="2.600" r="2.600" fill="#d9d9d8" stroke="#6e6e6e" stroke-width=".9"/><path d="M2.600.9l3.400 3.400M6 .9L2.600 4.300" stroke="#5a5a5a" stroke-width=".8"/><circle cx="6.800" cy="5.400" r="2.500" fill="#fbfbfb" stroke="#3a3a3a" stroke-width="1.200"/><path d="M10.300 21.700l10.200-11.900" stroke="#d9cb2e" stroke-width="2.800" stroke-linecap="round"/><path d="M13.500 14.300l7.500 8" stroke="#c9452c" stroke-width="2.600" stroke-linecap="round"/><path d="M14.500 15.300l6.300 6.800" stroke="#e9a03a" stroke-width="1" /><path d="M10.500 13.500c1-3 4-4.800 7-4.200l-2.800 1.800-2 3.400z" fill="#b9b9b7" stroke="#7a7a78" stroke-width=".7"/><path d="M17.300 12.900l3.800-3.600" stroke="#a5a5a3" stroke-width="2"/></svg>
<svg style="position:absolute;left:382px;top:110px;overflow:visible" width="24" height="24" viewBox="0 0 24 24"><rect x="3.6" y="2.6" width="19.6" height="5.300" fill="#f8e94e" stroke="#b8a01e" stroke-width="1"/><rect x="3.6" y="9.6" width="19.6" height="5.300" fill="#f8e94e" stroke="#b8a01e" stroke-width="1"/><rect x="3.6" y="16.6" width="19.6" height="5.300" fill="#f8e94e" stroke="#b8a01e" stroke-width="1"/><path d="M9.40 23.00L14.79 18.71L10.25 16.16Z" fill="#d9d2c0" stroke="#8a8a8a" stroke-width=".7"/><path d="M9.40 23.00L11.82 21.07L9.78 19.92Z" fill="#3d3d3d"/><path d="M14.79 18.71L22.59 4.79L18.06 2.25L10.25 16.16Z" fill="#d9532a" stroke="#7a3a22" stroke-width=".7"/><path d="M13.27 17.86L21.07 3.94M11.77 17.02L19.58 3.10" stroke="#f4c08a" stroke-width=".9"/><path d="M22.59 4.79L23.67 2.87L19.13 0.33L18.06 2.25Z" fill="#f3f1ee" stroke="#9a9894" stroke-width=".7"/></svg>
<svg style="position:absolute;left:416px;top:110px;overflow:visible" width="24" height="24" viewBox="0 0 24 24"><path d="M4.200 4.800h15.600" stroke="#bf0012" stroke-width="1.900"/><path d="M9.300 4.200c0-2.400 5.400-2.400 5.400 0" fill="none" stroke="#bf0012" stroke-width="1.500"/><path d="M5.600 8.300h12.800l-1.500 13.300H7.100z" fill="#fff" stroke="#bf0012" stroke-width="2" stroke-linejoin="round"/><path d="M9.800 9.600l.5 10.600M14.200 9.600l-.5 10.600" stroke="#d5606a" stroke-width="1.900"/><path d="M12 9.600v10.600" stroke="#e9a0a6" stroke-width="1"/></svg>
<svg style="position:absolute;left:449px;top:110px;overflow:visible" width="24" height="24" viewBox="0 0 24 24"><path d="M1.800 4.600l1.100-.2 12.600 7.300-.8 1.700z" fill="#d3d3d1" stroke="#747472" stroke-width=".7" stroke-linejoin="round"/><path d="M1 12.200l.3 1.300 14.400-.6.200-2.500z" fill="#bdbdbb" stroke="#747472" stroke-width=".7" stroke-linejoin="round"/><ellipse cx="19.600" cy="8.700" rx="3.500" ry="2" transform="rotate(-40 19.600 8.700)" fill="#f3e6e6" stroke="#b5121f" stroke-width="1.400"/><ellipse cx="19.300" cy="15.900" rx="3.500" ry="2" transform="rotate(48 19.300 15.900)" fill="#f3e6e6" stroke="#b5121f" stroke-width="1.400"/><path d="M15.200 11.800l2 1.700M15.400 11.600l1.700-1.200" stroke="#6b2a2e" stroke-width="1.300"/></svg>
<svg style="position:absolute;left:482px;top:110px;overflow:visible" width="24" height="24" viewBox="0 0 24 24"><path d="M8.6 2.3h7.199999999999999l4 4v11h-11.2z" fill="#f7f7f6" stroke="#bdbdbb" stroke-width="1" stroke-linejoin="round"/><path d="M15.799999999999997 2.3v4h4" fill="none" stroke="#bdbdbb" stroke-width="0.85" stroke-linejoin="round"/><path d="M15.500 8.500v7M17.300 9.500v6" stroke="#dadad8" stroke-width=".8"/><path d="M4.6 6.9h6.8l3.8 3.8v10.7h-10.6z" fill="#fff" stroke="#454545" stroke-width="1.4" stroke-linejoin="round"/><path d="M11.399999999999999 6.9v3.8h3.8" fill="none" stroke="#454545" stroke-width="1.19" stroke-linejoin="round"/><path d="M6.600 12.100h6.600M6.600 14.500h4.400M6.600 16.900h6.600M6.600 19.200h6.600" stroke="#8b8b89" stroke-width="1.100"/></svg>
<svg style="position:absolute;left:515px;top:110px;overflow:visible" width="24" height="24" viewBox="0 0 24 24"><rect x="4.500" y="2.600" width="15.300" height="19" rx="1" fill="#f4e3a8" stroke="#b58a30" stroke-width="1"/><rect x="7.800" y="1.300" width="8.600" height="3.600" rx=".8" fill="#cfcfcd" stroke="#6e6e6c" stroke-width=".9"/><path d="M6.9 5.5h7.6000000000000005l3.2 3.2v10.600000000000001h-10.8z" fill="#fff" stroke="#454545" stroke-width="1.4" stroke-linejoin="round"/><path d="M14.500000000000004 5.5v3.2h3.2" fill="none" stroke="#454545" stroke-width="1.19" stroke-linejoin="round"/><path d="M8.800 10.500h6.600M8.800 12.800h4.400M8.800 15.100h6.600M8.800 17.300h5" stroke="#8b8b89" stroke-width="1.100"/></svg>
<svg style="position:absolute;left:548px;top:110px;overflow:visible" width="24" height="24" viewBox="0 0 24 24"><path d="M3 9.600L9.800 3.300v3.800c6.600-.6 11.400 2.300 11.400 7 0 3.600-3.200 6.200-7.600 6.700-.9-.3-1.200-1.500-.3-2.100 2.100-.6 3.300-2.300 2.500-4.300-.8-1.800-3.100-2.300-6-2.100v4z" fill="#b3b3b1" stroke="#c3c3c1" stroke-width=".6" stroke-linejoin="round"/></svg>
<svg style="position:absolute;left:581px;top:110px;overflow:visible" width="24" height="24" viewBox="0 0 24 24"><path d="M21.100 9.400L14.300 3v3.900c-6.600-.6-11.400 2.300-11.400 7 0 3.600 3.200 6.200 7.600 6.700.9-.3 1.200-1.500.3-2.100-2.100-.6-3.300-2.300-2.500-4.300.8-1.800 3.100-2.300 6-2.100v4z" fill="#8fae8c" stroke="#58a858" stroke-width=".7" stroke-linejoin="round"/></svg>
<svg style="position:absolute;left:628px;top:110px;overflow:visible" width="24" height="24" viewBox="0 0 24 24"><path d="M1.9 9.45l4.7-4.75q.3-.4.900-.4H21.9q1 0 1 1v8.30q0 1-1 1H7.50q-.6 0-.900-.4z" fill="#f7e84c" stroke="#c9b026" stroke-width="1" stroke-linejoin="round"/><text x="13.809999999999999" y="11.85" font-family="Liberation Sans,sans-serif" font-weight="bold" font-size="7.8" letter-spacing=".25" text-anchor="middle" fill="#3a3410">abc</text></svg>
<svg style="position:absolute;left:661px;top:110px;overflow:visible" width="24" height="24" viewBox="0 0 24 24"><circle cx="11" cy="8.800" r="7" fill="#3aa655"/><path d="M11 8.400L5.300 4.700A7 7 0 0 1 17 5.200z" fill="#f5e82a"/><path d="M11 8.400L17 5.200A7 7 0 0 1 12 15.730z" fill="#b5171c"/><path d="M11 8.400L5.300 4.700M11 8.400L17 5.200M11 8.400l1 7.200" stroke="#5b4a10" stroke-width=".6"/><rect x="12.300" y="17" width="3.200" height="5.400" fill="#f5e82a" stroke="#d9c410" stroke-width=".6"/><rect x="16.500" y="10.400" width="3.400" height="12" fill="#3aa655" stroke="#23803a" stroke-width=".6"/><rect x="20.500" y="17" width="3.300" height="5.400" fill="#b5171c" stroke="#1a0a0a" stroke-width=".8"/></svg>
<svg style="position:absolute;left:695px;top:110px;overflow:visible" width="24" height="24" viewBox="0 0 24 24"><rect x="1.400" y="2.600" width="23.200" height="19" fill="#e4eef8" stroke="#3a6ea5" stroke-width="1.200"/><path d="M2.4 9.600000000000001l4.7-4.80q.3-.4.900-.4H20.2q1 0 1 1v8.40q0 1-1 1H8.00q-.6 0-.900-.4z" fill="#f7e84c" stroke="#c9b026" stroke-width="1" stroke-linejoin="round"/><text x="10.8" y="12.00" font-family="Liberation Sans,sans-serif" font-weight="bold" font-size="7.8" letter-spacing=".25" text-anchor="middle" fill="#3a3410">ab</text><path d="M18.700 9.600q.8-2 1.700 0v6" fill="none" stroke="#e9e3c0" stroke-width="1.300"/><circle cx="19.800" cy="18.300" r="4.700" fill="#a8141f"/><circle cx="18.600" cy="17" r="1.700" fill="#d8505a"/></svg>
<svg style="position:absolute;left:728px;top:110px;overflow:visible" width="24" height="24" viewBox="0 0 24 24"><path d="M1.7 9.45l4.7-4.75q.3-.4.900-.4H20.8q1 0 1 1v8.30q0 1-1 1H7.30q-.6 0-.900-.4z" fill="#e9e9e8" stroke="#b3b3b1" stroke-width="1" stroke-linejoin="round"/><text x="10.3" y="11.85" font-family="Liberation Sans,sans-serif" font-weight="bold" font-size="7.8" letter-spacing=".25" text-anchor="middle" fill="#8f8f8d">ab</text><path d="M18.700 9.600q.8-2 1.700 0v6" fill="none" stroke="#fff" stroke-width="1.300"/><circle cx="19.800" cy="18.300" r="4.700" fill="#8f8f8d"/><circle cx="18.600" cy="17" r="1.700" fill="#a9a9a7"/></svg>
<svg style="position:absolute;left:761px;top:110px;overflow:visible" width="24" height="24" viewBox="0 0 24 24"><path d="M1.2 9.45l4.7-4.75q.3-.4.900-.4H20.6q1 0 1 1v8.30q0 1-1 1H6.80q-.6 0-.900-.4z" fill="#e9e9e8" stroke="#b3b3b1" stroke-width="1" stroke-linejoin="round"/><text x="12.81" y="11.85" font-family="Liberation Sans,sans-serif" font-weight="bold" font-size="7.8" letter-spacing=".25" text-anchor="middle" fill="#8f8f8d">abc</text><path d="M9.500 19.700c3.500-5.400 10-5.400 14.300 0-4.300 4.400-10.800 4.400-14.300 0z" fill="#fafafa" stroke="#8b8b89" stroke-width=".9"/><circle cx="16.300" cy="19" r="2.700" fill="#7b7b79"/><circle cx="16.300" cy="19" r="1.100" fill="#2b2b2b"/><path d="M10.500 16.200c3.600-3 8.800-3 12.400-.2" fill="none" stroke="#8b8b89" stroke-width=".8"/></svg>
<svg style="position:absolute;left:794px;top:110px;overflow:visible" width="24" height="24" viewBox="0 0 24 24"><path d="M1.2 9.45l4.7-4.75q.3-.4.900-.4H20.8q1 0 1 1v8.30q0 1-1 1H6.80q-.6 0-.900-.4z" fill="#e9e9e8" stroke="#b3b3b1" stroke-width="1" stroke-linejoin="round"/><text x="12.91" y="11.85" font-family="Liberation Sans,sans-serif" font-weight="bold" font-size="7.8" letter-spacing=".25" text-anchor="middle" fill="#8f8f8d">abc</text><rect x="14.3" y="13.300" width="10.600" height="10.500" rx="1.400" fill="#8f8f8d"/><path d="M15.700 17.300h4.200v-2.200l3.900 3.500-3.900 3.500v-2.200h-4.200z" fill="#fff"/></svg>
<svg style="position:absolute;left:827px;top:110px;overflow:visible" width="24" height="24" viewBox="0 0 24 24"><path d="M1.4 9.45l4.7-4.75q.3-.4.900-.4H20.9q1 0 1 1v8.30q0 1-1 1H7.00q-.6 0-.900-.4z" fill="#e9e9e8" stroke="#b3b3b1" stroke-width="1" stroke-linejoin="round"/><text x="13.059999999999999" y="11.85" font-family="Liberation Sans,sans-serif" font-weight="bold" font-size="7.8" letter-spacing=".25" text-anchor="middle" fill="#8f8f8d">abc</text><rect x="14.2" y="13.300" width="10.600" height="10.500" rx="1.400" fill="#8f8f8d"/><path d="M17.300 20.800a3.100 3.100 0 1 1 4.800-1.600" fill="none" stroke="#fff" stroke-width="1.700"/><path d="M19.700 19.300l4.300-.3-1.800 3.700z" fill="#fff"/></svg>
<svg style="position:absolute;left:860px;top:110px;overflow:visible" width="24" height="24" viewBox="0 0 24 24"><path d="M1.2 9.45l4.7-4.75q.3-.4.900-.4H20.8q1 0 1 1v8.30q0 1-1 1H6.80q-.6 0-.900-.4z" fill="#e9e9e8" stroke="#b3b3b1" stroke-width="1" stroke-linejoin="round"/><text x="12.91" y="11.85" font-family="Liberation Sans,sans-serif" font-weight="bold" font-size="7.8" letter-spacing=".25" text-anchor="middle" fill="#8f8f8d">abc</text><rect x="14.3" y="13.300" width="10.600" height="10.500" rx="1.400" fill="#c9c9c7"/><path d="M17.300 21l5-5" stroke="#fff" stroke-width="2.300"/><path d="M16 22.300l.5-2 1.500 1.500z" fill="#fff"/></svg>
<svg style="position:absolute;left:910px;top:110px;overflow:visible" width="24" height="24" viewBox="0 0 24 24"><ellipse cx="12" cy="9.800" rx="11.900" ry="9.800" fill="#a6c4e4" stroke="#5d7fa8" stroke-width=".8"/><ellipse cx="9.500" cy="7" rx="7" ry="5" fill="#d3e3f4" fill-opacity=".7"/><path d="M3.300 6.200l3.800-1.400 1.300 1.300-2.200 3-2.600.6zM10.300 2.800l2.700-.6 1.300 1-2.300.9zM11.800 5.400l6.800-.8 2.600 2.500-1.700 3.300-3.600.4-.7-2-2.800.6zM4.300 11.300l2-.4.800 4-1.700-.6zM12.300 11l2.600-.4.600 2.400-2 .4zM17.300 11.600l3.300-.3.300 2-2.600.6z" fill="#2d4d78" fill-opacity=".88"/><path d="M.300 9.800h23.400M2 5.300h20M12 0v13" stroke="#eaf2fb" stroke-width=".6" stroke-opacity=".8" fill="none"/><path d="M9.100 13h3.300l.4 7.200H3.500z M15.100 13h3.100l6 7.200h-9.400z" fill="#050505"/><rect x="11.600" y="14.800" width="4.400" height="4.600" fill="#050505"/><ellipse cx="8.100" cy="20.900" rx="4.500" ry="2.700" fill="#050505"/><ellipse cx="19.900" cy="20.900" rx="4.500" ry="2.700" fill="#050505"/><ellipse cx="8.100" cy="21" rx="2.700" ry="1.400" fill="#fff"/><ellipse cx="19.900" cy="21" rx="2.700" ry="1.400" fill="#fff"/></svg>
<svg style="position:absolute;left:959px;top:110px;overflow:visible" width="24" height="24" viewBox="0 0 24 24"><path d="M11.600 2c-3.600 0-5.200 1.200-5.200 3.200v2.600h5.400v.9H4.600C2.700 8.700 1.800 10.500 1.800 13s.9 4.400 2.800 4.400h2v-2.700c0-2 1.600-3.400 3.500-3.400h5c1.600 0 2.800-1.200 2.800-2.800V5.200C17.900 3.200 15.600 2 11.600 2z" fill="#3572a5"/><circle cx="8.800" cy="4.700" r="1" fill="#fff"/><path d="M13.400 23c3.600 0 5.200-1.200 5.200-3.200v-2.600h-5.400v-.9h7.200c1.900 0 2.800-1.800 2.800-4.300s-.9-4.400-2.800-4.400h-2v2.700c0 2-1.600 3.400-3.500 3.400h-5c-1.600 0-2.800 1.200-2.800 2.800v3.300c0 2 2.300 3.200 6.300 3.200z" fill="#f7d44c"/><path d="M16.800 18l5.400 2.300-5.400 2.300" fill="none" stroke="#3d3d3d" stroke-width="1.300"/></svg>
<svg style="position:absolute;left:1023px;top:110px;overflow:visible" width="24" height="24" viewBox="0 0 24 24"><rect x="2.300" y="1.600" width="19.600" height="20.300" rx=".8" fill="#6b93c0" stroke="#1f2c3a" stroke-width="1.300"/><rect x="2.300" y="1.600" width="5" height="20.300" fill="#2c3e50"/><text x="14.600" y="17.800" font-family="Liberation Sans,sans-serif" font-size="15.500" text-anchor="middle" fill="#fff">?</text></svg>
<svg style="position:absolute;left:1090px;top:110px;overflow:visible" width="24" height="24" viewBox="0 0 24 24"><path d="M3 20C3.200 14 4.500 10 6.200 7.800 9.500 5 13 4.200 18 4" fill="none" stroke="#8fae8c" stroke-width="1.300"/><rect x="1.3" y="18.3" width="3.400" height="3.400" rx=".5" fill="#e3e3e2" stroke="#757573" stroke-width="1"/><rect x="4.5" y="6.1" width="3.400" height="3.400" rx=".5" fill="#e3e3e2" stroke="#757573" stroke-width="1"/><rect x="16.3" y="2.3" width="3.400" height="3.400" rx=".5" fill="#e3e3e2" stroke="#757573" stroke-width="1"/><rect x="12" y="13.3" width="10.8" height="10.8" rx="1.8" fill="#c6aa22" stroke="#e6d768" stroke-width=".9"/><path d="M18.50 18.70L21.29 18.70M18.18 19.48L20.15 21.45M17.40 19.80L17.40 22.59M16.62 19.48L14.65 21.45M16.30 18.70L13.51 18.70M16.62 17.92L14.65 15.95M17.40 17.60L17.40 14.81M18.18 17.92L20.15 15.95" stroke="#fffbe0" stroke-width="1.5" stroke-linecap="round"/><circle cx="17.4" cy="18.700000000000003" r="1.1" fill="#c6aa22" stroke="#fffbe0" stroke-width=".7"/></svg>
<svg style="position:absolute;left:368.4px;top:120.3px;overflow:visible" width="7.6" height="3.9" viewBox="0 0 7.6 3.9"><path d="M0 0h7.6l-3.8 3.9z" fill="#4c4c4c"/></svg>
<svg style="position:absolute;left:1119.3px;top:120.2px;overflow:visible" width="7.6" height="3.9" viewBox="0 0 7.6 3.9"><path d="M0 0h7.6l-3.8 3.9z" fill="#4c4c4c"/></svg>
<svg style="position:absolute;left:226.6px;top:131.4px;overflow:visible" width="5.4" height="2.9" viewBox="0 0 5.4 2.9"><path d="M0 0h5.4l-2.7 2.9z" fill="#4c4c4c"/></svg>
<svg style="position:absolute;left:992.7px;top:119.7px;overflow:visible" width="9" height="6" viewBox="0 0 9 6"><path d="M.6.300l2.900 2.600-2.900 2.600M4.800.300l2.900 2.600-2.900 2.600" fill="none" stroke="#111" stroke-width="1.700"/></svg>
<svg style="position:absolute;left:1132.7px;top:120px;overflow:visible" width="9" height="6" viewBox="0 0 9 6"><path d="M.6.300l2.900 2.600-2.900 2.600M4.800.300l2.900 2.600-2.900 2.600" fill="none" stroke="#111" stroke-width="1.700"/></svg>
<div style="position:absolute;left:8px;top:141px;width:1138px;height:1px;background:#b5b4b1"></div>
<div style="position:absolute;left:931px;top:168px;width:23px;height:22px;background:#dddcda;border:1px solid #b7b6b3;border-radius:4px;width:22px;height:21px"></div>
<div style="position:absolute;left:927.5px;top:174px;width:1.6px;height:11px;background:#fbfbfa"></div>
<div style="position:absolute;left:959.5px;top:174px;width:1.6px;height:11px;background:#fbfbfa"></div>
<svg style="position:absolute;left:826px;top:169px;overflow:visible" width="24" height="24" viewBox="0 0 24 24"><path d="M9.79 6.08 L11.71 5.97 L11.71 7.83 L9.79 7.72 L9.49 8.44 L10.93 9.72 L9.62 11.03 L8.34 9.59 L7.62 9.89 L7.73 11.81 L5.87 11.81 L5.98 9.89 L5.26 9.59 L3.98 11.03 L2.67 9.72 L4.11 8.44 L3.81 7.72 L1.89 7.83 L1.89 5.97 L3.81 6.08 L4.11 5.36 L2.67 4.08 L3.98 2.77 L5.26 4.21 L5.98 3.91 L5.87 1.99 L7.73 1.99 L7.62 3.91 L8.34 4.21 L9.62 2.77 L10.93 4.08 L9.49 5.36ZM8.00 6.90A1.2 1.2 0 1 0 5.60 6.90A1.2 1.2 0 1 0 8.00 6.90Z" fill="#c8101a" fill-rule="evenodd"/><path d="M17.01 9.74 L18.53 9.66 L18.53 11.14 L17.01 11.06 L16.77 11.64 L17.90 12.65 L16.85 13.70 L15.84 12.57 L15.26 12.81 L15.34 14.33 L13.86 14.33 L13.94 12.81 L13.36 12.57 L12.35 13.70 L11.30 12.65 L12.43 11.64 L12.19 11.06 L10.67 11.14 L10.67 9.66 L12.19 9.74 L12.43 9.16 L11.30 8.15 L12.35 7.10 L13.36 8.23 L13.94 7.99 L13.86 6.47 L15.34 6.47 L15.26 7.99 L15.84 8.23 L16.85 7.10 L17.90 8.15 L16.77 9.16ZM15.60 10.40A1 1 0 1 0 13.60 10.40A1 1 0 1 0 15.60 10.40Z" fill="#7b7b79" fill-rule="evenodd"/><path d="M11.52 14.72 L12.84 14.65 L12.84 15.95 L11.52 15.88 L11.31 16.39 L12.29 17.27 L11.37 18.19 L10.49 17.21 L9.98 17.42 L10.05 18.74 L8.75 18.74 L8.82 17.42 L8.31 17.21 L7.43 18.19 L6.51 17.27 L7.49 16.39 L7.28 15.88 L5.96 15.95 L5.96 14.65 L7.28 14.72 L7.49 14.21 L6.51 13.33 L7.43 12.41 L8.31 13.39 L8.82 13.18 L8.75 11.86 L10.05 11.86 L9.98 13.18 L10.49 13.39 L11.37 12.41 L12.29 13.33 L11.31 14.21ZM10.30 15.30A0.9 0.9 0 1 0 8.50 15.30A0.9 0.9 0 1 0 10.30 15.30Z" fill="#9fc0e6" fill-rule="evenodd"/></svg>
<svg style="position:absolute;left:846.4px;top:169.6px;overflow:visible" width="24" height="24" viewBox="0 0 24 24"><g transform="translate(6.400 1.300) scale(.66)"><path d="M11.600 2c-3.600 0-5.200 1.200-5.200 3.200v2.600h5.400v.9H4.600C2.700 8.700 1.800 10.500 1.800 13s.9 4.400 2.800 4.400h2v-2.700c0-2 1.600-3.400 3.500-3.400h5c1.600 0 2.800-1.200 2.800-2.800V5.200C17.900 3.200 15.600 2 11.600 2z" fill="#3572a5"/><circle cx="8.800" cy="4.700" r="1" fill="#fff"/><path d="M13.400 23c3.600 0 5.200-1.200 5.200-3.200v-2.600h-5.400v-.9h7.200c1.900 0 2.800-1.800 2.800-4.300s-.9-4.400-2.800-4.400h-2v2.700c0 2-1.600 3.400-3.500 3.400h-5c-1.600 0-2.800 1.200-2.800 2.800v3.300c0 2 2.300 3.200 6.300 3.200z" fill="#f7d44c"/></g></svg>
<svg style="position:absolute;left:874px;top:166.9px;overflow:visible" width="24" height="24" viewBox="0 0 24 24"><circle cx="12" cy="12" r="7.300" fill="#fdfdfd" stroke="#7d7d7b" stroke-width="1"/><path d="M12 7V12l3.500 2.500" fill="none" stroke="#6a6a68" stroke-width="1"/></svg>
<svg style="position:absolute;left:898.9px;top:166.8px;overflow:visible" width="24" height="24" viewBox="0 0 24 24"><path d="M6.2 4.8h7.4l3.6 3.6v11.1h-11z" fill="#f3f3f2" stroke="#bdbdbb" stroke-width="1.1" stroke-linejoin="round"/><path d="M13.6 4.8v3.6h3.6" fill="none" stroke="#bdbdbb" stroke-width="0.94" stroke-linejoin="round"/><path d="M8.200 10.300h5M8.200 12.700h7M8.200 15.100h7M8.200 17.300h5.600" stroke="#9d9d9b" stroke-width="1.100"/></svg>
<svg style="position:absolute;left:929.9px;top:167.8px;overflow:visible" width="24" height="24" viewBox="0 0 24 24"><rect x="5.800" y="4.400" width="10" height="9.600" fill="#f7e84c" stroke="#d9c83a" stroke-width=".9"/><path d="M12.40 18.20L15.71 16.50L12.73 14.49Z" fill="#d9d2c0" stroke="#8a8a8a" stroke-width=".7"/><path d="M12.40 18.20L13.89 17.44L12.55 16.53Z" fill="#3d3d3d"/><path d="M15.71 16.50L19.66 10.63L16.68 8.62L12.73 14.49Z" fill="#f0e45a" stroke="#a9a23a" stroke-width=".7"/><path d="M14.71 15.83L18.66 9.96M13.73 15.16L17.68 9.29" stroke="#c9c24a" stroke-width=".9"/><path d="M19.66 10.63L20.89 8.81L17.91 6.79L16.68 8.62Z" fill="#f3f1ee" stroke="#9a9894" stroke-width=".7"/></svg>
<svg style="position:absolute;left:962px;top:166.6px;overflow:visible" width="24" height="24" viewBox="0 0 24 24"><path d="M13.78 13.09L19.60 18.30" stroke="#6f6a3a" stroke-width="4.0" stroke-linecap="round"/><path d="M13.78 13.09L19.60 18.30" stroke="#ecdc92" stroke-width="2.5" stroke-linecap="round"/><path d="M11.09 10.69L12.29 11.76" stroke="#9a9a98" stroke-width="2.9"/><path d="M12.29 11.76L13.78 13.09" stroke="#1f1f1f" stroke-width="3.7"/><circle cx="9" cy="8.6" r="3.7" fill="#e6e6e5" stroke="#6c6c6a" stroke-width="1"/><path d="M9.42 9.02L6.74 6.34" stroke="#6c6c6a" stroke-width="3.8"/><path d="M9.07 8.67L5.32 4.92" stroke="#efeeed" stroke-width="2.3"/></svg>
<svg style="position:absolute;left:840.4px;top:184.2px;overflow:visible" width="5.6" height="2.9" viewBox="0 0 5.6 2.9"><path d="M0 0h5.6l-2.8 2.9z" fill="#4c4c4c"/></svg>
<svg style="position:absolute;left:865.4px;top:184.2px;overflow:visible" width="5.6" height="2.9" viewBox="0 0 5.6 2.9"><path d="M0 0h5.6l-2.8 2.9z" fill="#4c4c4c"/></svg>
<svg style="position:absolute;left:840.1px;top:222.7px;overflow:visible" width="24" height="24" viewBox="0 0 24 24"><circle cx="12" cy="12" r="7.300" fill="#fdfdfd" stroke="#7d7d7b" stroke-width="1"/><path d="M12 7V12l3.500 2.500" fill="none" stroke="#6a6a68" stroke-width="1"/></svg>
<svg style="position:absolute;left:840.5px;top:245.4px;overflow:visible" width="24" height="24" viewBox="0 0 24 24"><circle cx="11.250" cy="11.600" r="5.300" fill="none" stroke="#72aa30" stroke-width="2.900"/><path d="M12.700 13.200l4.500 4.300" stroke="#f4f8e8" stroke-width="4"/><path d="M12.500 13l4.800 4.600" stroke="#88b638" stroke-width="2.800"/><circle cx="11.500" cy="11.800" r="1.300" fill="#e8622a"/><circle cx="11.800" cy="12.100" r=".7" fill="#f6d23a"/></svg>
<svg style="position:absolute;left:840.5px;top:267.4px;overflow:visible" width="24" height="24" viewBox="0 0 24 24"><circle cx="11.250" cy="11.600" r="5.300" fill="none" stroke="#72aa30" stroke-width="2.900"/><path d="M12.700 13.200l4.500 4.300" stroke="#f4f8e8" stroke-width="4"/><path d="M12.500 13l4.800 4.600" stroke="#88b638" stroke-width="2.800"/><circle cx="11.500" cy="11.800" r="1.300" fill="#e8622a"/><circle cx="11.800" cy="12.100" r=".7" fill="#f6d23a"/></svg>
<svg style="position:absolute;left:840.5px;top:289.4px;overflow:visible" width="24" height="24" viewBox="0 0 24 24"><circle cx="11.250" cy="11.600" r="5.300" fill="none" stroke="#72aa30" stroke-width="2.900"/><path d="M12.700 13.200l4.500 4.300" stroke="#f4f8e8" stroke-width="4"/><path d="M12.500 13l4.800 4.600" stroke="#88b638" stroke-width="2.800"/><circle cx="11.500" cy="11.800" r="1.300" fill="#e8622a"/><circle cx="11.800" cy="12.100" r=".7" fill="#f6d23a"/></svg>
<svg style="position:absolute;left:860px;top:311.1px;overflow:visible" width="24" height="24" viewBox="0 0 24 24"><path d="M15.93 10.83 L19.22 10.90 L19.22 13.10 L15.93 13.17 L15.61 13.95 L17.88 16.33 L16.33 17.88 L13.95 15.61 L13.17 15.93 L13.10 19.22 L10.90 19.22 L10.83 15.93 L10.05 15.61 L7.67 17.88 L6.12 16.33 L8.39 13.95 L8.07 13.17 L4.78 13.10 L4.78 10.90 L8.07 10.83 L8.39 10.05 L6.12 7.67 L7.67 6.12 L10.05 8.39 L10.83 8.07 L10.90 4.78 L13.10 4.78 L13.17 8.07 L13.95 8.39 L16.33 6.12 L17.88 7.67 L15.61 10.05ZM13.15 12.00A1.15 1.15 0 1 0 10.85 12.00A1.15 1.15 0 1 0 13.15 12.00Z" fill="#8fb0da" stroke="#8fb0da" stroke-width=".4" stroke-linejoin="round" fill-rule="evenodd"/><circle cx="18.50" cy="12.00" r=".95" fill="#7099cb"/><circle cx="16.60" cy="16.60" r=".95" fill="#7099cb"/><circle cx="12.00" cy="18.50" r=".95" fill="#7099cb"/><circle cx="7.40" cy="16.60" r=".95" fill="#7099cb"/><circle cx="5.50" cy="12.00" r=".95" fill="#7099cb"/><circle cx="7.40" cy="7.40" r=".95" fill="#7099cb"/><circle cx="12.00" cy="5.50" r=".95" fill="#7099cb"/><circle cx="16.60" cy="7.40" r=".95" fill="#7099cb"/></svg>
<svg style="position:absolute;left:860px;top:333.8px;overflow:visible" width="24" height="24" viewBox="0 0 24 24"><path d="M5.400 9.600l3.600-5 9.700-.5v2.200L10 18 5.600 14.500z" fill="#6d7d7c" stroke="#4c5857" stroke-width=".9" stroke-linejoin="round"/><path d="M8.400 9.200l2.300-2.700 5.400-.2" fill="none" stroke="#8c9a99" stroke-width="1.200"/></svg>
<svg style="position:absolute;left:860px;top:355.1px;overflow:visible" width="24" height="24" viewBox="0 0 24 24"><path d="M15.93 10.83 L19.22 10.90 L19.22 13.10 L15.93 13.17 L15.61 13.95 L17.88 16.33 L16.33 17.88 L13.95 15.61 L13.17 15.93 L13.10 19.22 L10.90 19.22 L10.83 15.93 L10.05 15.61 L7.67 17.88 L6.12 16.33 L8.39 13.95 L8.07 13.17 L4.78 13.10 L4.78 10.90 L8.07 10.83 L8.39 10.05 L6.12 7.67 L7.67 6.12 L10.05 8.39 L10.83 8.07 L10.90 4.78 L13.10 4.78 L13.17 8.07 L13.95 8.39 L16.33 6.12 L17.88 7.67 L15.61 10.05ZM13.15 12.00A1.15 1.15 0 1 0 10.85 12.00A1.15 1.15 0 1 0 13.15 12.00Z" fill="#8fb0da" stroke="#8fb0da" stroke-width=".4" stroke-linejoin="round" fill-rule="evenodd"/><circle cx="18.50" cy="12.00" r=".95" fill="#7099cb"/><circle cx="16.60" cy="16.60" r=".95" fill="#7099cb"/><circle cx="12.00" cy="18.50" r=".95" fill="#7099cb"/><circle cx="7.40" cy="16.60" r=".95" fill="#7099cb"/><circle cx="5.50" cy="12.00" r=".95" fill="#7099cb"/><circle cx="7.40" cy="7.40" r=".95" fill="#7099cb"/><circle cx="12.00" cy="5.50" r=".95" fill="#7099cb"/><circle cx="16.60" cy="7.40" r=".95" fill="#7099cb"/></svg>
<svg style="position:absolute;left:860px;top:377.1px;overflow:visible" width="24" height="24" viewBox="0 0 24 24"><path d="M15.93 10.83 L19.22 10.90 L19.22 13.10 L15.93 13.17 L15.61 13.95 L17.88 16.33 L16.33 17.88 L13.95 15.61 L13.17 15.93 L13.10 19.22 L10.90 19.22 L10.83 15.93 L10.05 15.61 L7.67 17.88 L6.12 16.33 L8.39 13.95 L8.07 13.17 L4.78 13.10 L4.78 10.90 L8.07 10.83 L8.39 10.05 L6.12 7.67 L7.67 6.12 L10.05 8.39 L10.83 8.07 L10.90 4.78 L13.10 4.78 L13.17 8.07 L13.95 8.39 L16.33 6.12 L17.88 7.67 L15.61 10.05ZM13.15 12.00A1.15 1.15 0 1 0 10.85 12.00A1.15 1.15 0 1 0 13.15 12.00Z" fill="#8fb0da" stroke="#8fb0da" stroke-width=".4" stroke-linejoin="round" fill-rule="evenodd"/><circle cx="18.50" cy="12.00" r=".95" fill="#7099cb"/><circle cx="16.60" cy="16.60" r=".95" fill="#7099cb"/><circle cx="12.00" cy="18.50" r=".95" fill="#7099cb"/><circle cx="7.40" cy="16.60" r=".95" fill="#7099cb"/><circle cx="5.50" cy="12.00" r=".95" fill="#7099cb"/><circle cx="7.40" cy="7.40" r=".95" fill="#7099cb"/><circle cx="12.00" cy="5.50" r=".95" fill="#7099cb"/><circle cx="16.60" cy="7.40" r=".95" fill="#7099cb"/></svg>
<svg style="position:absolute;left:860px;top:399.1px;overflow:visible" width="24" height="24" viewBox="0 0 24 24"><path d="M15.93 10.83 L19.22 10.90 L19.22 13.10 L15.93 13.17 L15.61 13.95 L17.88 16.33 L16.33 17.88 L13.95 15.61 L13.17 15.93 L13.10 19.22 L10.90 19.22 L10.83 15.93 L10.05 15.61 L7.67 17.88 L6.12 16.33 L8.39 13.95 L8.07 13.17 L4.78 13.10 L4.78 10.90 L8.07 10.83 L8.39 10.05 L6.12 7.67 L7.67 6.12 L10.05 8.39 L10.83 8.07 L10.90 4.78 L13.10 4.78 L13.17 8.07 L13.95 8.39 L16.33 6.12 L17.88 7.67 L15.61 10.05ZM13.15 12.00A1.15 1.15 0 1 0 10.85 12.00A1.15 1.15 0 1 0 13.15 12.00Z" fill="#8fb0da" stroke="#8fb0da" stroke-width=".4" stroke-linejoin="round" fill-rule="evenodd"/><circle cx="18.50" cy="12.00" r=".95" fill="#7099cb"/><circle cx="16.60" cy="16.60" r=".95" fill="#7099cb"/><circle cx="12.00" cy="18.50" r=".95" fill="#7099cb"/><circle cx="7.40" cy="16.60" r=".95" fill="#7099cb"/><circle cx="5.50" cy="12.00" r=".95" fill="#7099cb"/><circle cx="7.40" cy="7.40" r=".95" fill="#7099cb"/><circle cx="12.00" cy="5.50" r=".95" fill="#7099cb"/><circle cx="16.60" cy="7.40" r=".95" fill="#7099cb"/></svg>
<svg style="position:absolute;left:860px;top:421.1px;overflow:visible" width="24" height="24" viewBox="0 0 24 24"><path d="M15.93 10.83 L19.22 10.90 L19.22 13.10 L15.93 13.17 L15.61 13.95 L17.88 16.33 L16.33 17.88 L13.95 15.61 L13.17 15.93 L13.10 19.22 L10.90 19.22 L10.83 15.93 L10.05 15.61 L7.67 17.88 L6.12 16.33 L8.39 13.95 L8.07 13.17 L4.78 13.10 L4.78 10.90 L8.07 10.83 L8.39 10.05 L6.12 7.67 L7.67 6.12 L10.05 8.39 L10.83 8.07 L10.90 4.78 L13.10 4.78 L13.17 8.07 L13.95 8.39 L16.33 6.12 L17.88 7.67 L15.61 10.05ZM13.15 12.00A1.15 1.15 0 1 0 10.85 12.00A1.15 1.15 0 1 0 13.15 12.00Z" fill="#8fb0da" stroke="#8fb0da" stroke-width=".4" stroke-linejoin="round" fill-rule="evenodd"/><circle cx="18.50" cy="12.00" r=".95" fill="#7099cb"/><circle cx="16.60" cy="16.60" r=".95" fill="#7099cb"/><circle cx="12.00" cy="18.50" r=".95" fill="#7099cb"/><circle cx="7.40" cy="16.60" r=".95" fill="#7099cb"/><circle cx="5.50" cy="12.00" r=".95" fill="#7099cb"/><circle cx="7.40" cy="7.40" r=".95" fill="#7099cb"/><circle cx="12.00" cy="5.50" r=".95" fill="#7099cb"/><circle cx="16.60" cy="7.40" r=".95" fill="#7099cb"/></svg>
<svg style="position:absolute;left:860px;top:443.1px;overflow:visible" width="24" height="24" viewBox="0 0 24 24"><path d="M15.93 10.83 L19.22 10.90 L19.22 13.10 L15.93 13.17 L15.61 13.95 L17.88 16.33 L16.33 17.88 L13.95 15.61 L13.17 15.93 L13.10 19.22 L10.90 19.22 L10.83 15.93 L10.05 15.61 L7.67 17.88 L6.12 16.33 L8.39 13.95 L8.07 13.17 L4.78 13.10 L4.78 10.90 L8.07 10.83 L8.39 10.05 L6.12 7.67 L7.67 6.12 L10.05 8.39 L10.83 8.07 L10.90 4.78 L13.10 4.78 L13.17 8.07 L13.95 8.39 L16.33 6.12 L17.88 7.67 L15.61 10.05ZM13.15 12.00A1.15 1.15 0 1 0 10.85 12.00A1.15 1.15 0 1 0 13.15 12.00Z" fill="#8fb0da" stroke="#8fb0da" stroke-width=".4" stroke-linejoin="round" fill-rule="evenodd"/><circle cx="18.50" cy="12.00" r=".95" fill="#7099cb"/><circle cx="16.60" cy="16.60" r=".95" fill="#7099cb"/><circle cx="12.00" cy="18.50" r=".95" fill="#7099cb"/><circle cx="7.40" cy="16.60" r=".95" fill="#7099cb"/><circle cx="5.50" cy="12.00" r=".95" fill="#7099cb"/><circle cx="7.40" cy="7.40" r=".95" fill="#7099cb"/><circle cx="12.00" cy="5.50" r=".95" fill="#7099cb"/><circle cx="16.60" cy="7.40" r=".95" fill="#7099cb"/></svg>
<svg style="position:absolute;left:860px;top:465.1px;overflow:visible" width="24" height="24" viewBox="0 0 24 24"><path d="M15.93 10.83 L19.22 10.90 L19.22 13.10 L15.93 13.17 L15.61 13.95 L17.88 16.33 L16.33 17.88 L13.95 15.61 L13.17 15.93 L13.10 19.22 L10.90 19.22 L10.83 15.93 L10.05 15.61 L7.67 17.88 L6.12 16.33 L8.39 13.95 L8.07 13.17 L4.78 13.10 L4.78 10.90 L8.07 10.83 L8.39 10.05 L6.12 7.67 L7.67 6.12 L10.05 8.39 L10.83 8.07 L10.90 4.78 L13.10 4.78 L13.17 8.07 L13.95 8.39 L16.33 6.12 L17.88 7.67 L15.61 10.05ZM13.15 12.00A1.15 1.15 0 1 0 10.85 12.00A1.15 1.15 0 1 0 13.15 12.00Z" fill="#8fb0da" stroke="#8fb0da" stroke-width=".4" stroke-linejoin="round" fill-rule="evenodd"/><circle cx="18.50" cy="12.00" r=".95" fill="#7099cb"/><circle cx="16.60" cy="16.60" r=".95" fill="#7099cb"/><circle cx="12.00" cy="18.50" r=".95" fill="#7099cb"/><circle cx="7.40" cy="16.60" r=".95" fill="#7099cb"/><circle cx="5.50" cy="12.00" r=".95" fill="#7099cb"/><circle cx="7.40" cy="7.40" r=".95" fill="#7099cb"/><circle cx="12.00" cy="5.50" r=".95" fill="#7099cb"/><circle cx="16.60" cy="7.40" r=".95" fill="#7099cb"/></svg>
<svg style="position:absolute;left:860px;top:487.4px;overflow:visible" width="24" height="24" viewBox="0 0 24 24"><path d="M5.200 6c2-2.200 4.600-.6 7.400-1.200 2.600-.6 5.200-.4 6.200 1.200.8 1.400-.2 3-2.300 3.400-2 .4-3.600-.4-5.600.4-1.600.7-3.600.6-5-.4C4.600 8.600 4.400 7 5.200 6z" fill="#e6e6e4" stroke="#868684" stroke-width=".9"/><ellipse cx="9.900" cy="15.200" rx="4.300" ry="3.300" transform="rotate(-28 9.900 15.200)" fill="#8fae7c" stroke="#7c8f74" stroke-width=".8" stroke-dasharray="1.600 .9"/></svg>
<svg style="position:absolute;left:860px;top:509.1px;overflow:visible" width="24" height="24" viewBox="0 0 24 24"><path d="M15.93 10.83 L19.22 10.90 L19.22 13.10 L15.93 13.17 L15.61 13.95 L17.88 16.33 L16.33 17.88 L13.95 15.61 L13.17 15.93 L13.10 19.22 L10.90 19.22 L10.83 15.93 L10.05 15.61 L7.67 17.88 L6.12 16.33 L8.39 13.95 L8.07 13.17 L4.78 13.10 L4.78 10.90 L8.07 10.83 L8.39 10.05 L6.12 7.67 L7.67 6.12 L10.05 8.39 L10.83 8.07 L10.90 4.78 L13.10 4.78 L13.17 8.07 L13.95 8.39 L16.33 6.12 L17.88 7.67 L15.61 10.05ZM13.15 12.00A1.15 1.15 0 1 0 10.85 12.00A1.15 1.15 0 1 0 13.15 12.00Z" fill="#8fb0da" stroke="#8fb0da" stroke-width=".4" stroke-linejoin="round" fill-rule="evenodd"/><circle cx="18.50" cy="12.00" r=".95" fill="#7099cb"/><circle cx="16.60" cy="16.60" r=".95" fill="#7099cb"/><circle cx="12.00" cy="18.50" r=".95" fill="#7099cb"/><circle cx="7.40" cy="16.60" r=".95" fill="#7099cb"/><circle cx="5.50" cy="12.00" r=".95" fill="#7099cb"/><circle cx="7.40" cy="7.40" r=".95" fill="#7099cb"/><circle cx="12.00" cy="5.50" r=".95" fill="#7099cb"/><circle cx="16.60" cy="7.40" r=".95" fill="#7099cb"/></svg>
<svg style="position:absolute;left:860px;top:531.1px;overflow:visible" width="24" height="24" viewBox="0 0 24 24"><path d="M15.93 10.83 L19.22 10.90 L19.22 13.10 L15.93 13.17 L15.61 13.95 L17.88 16.33 L16.33 17.88 L13.95 15.61 L13.17 15.93 L13.10 19.22 L10.90 19.22 L10.83 15.93 L10.05 15.61 L7.67 17.88 L6.12 16.33 L8.39 13.95 L8.07 13.17 L4.78 13.10 L4.78 10.90 L8.07 10.83 L8.39 10.05 L6.12 7.67 L7.67 6.12 L10.05 8.39 L10.83 8.07 L10.90 4.78 L13.10 4.78 L13.17 8.07 L13.95 8.39 L16.33 6.12 L17.88 7.67 L15.61 10.05ZM13.15 12.00A1.15 1.15 0 1 0 10.85 12.00A1.15 1.15 0 1 0 13.15 12.00Z" fill="#8fb0da" stroke="#8fb0da" stroke-width=".4" stroke-linejoin="round" fill-rule="evenodd"/><circle cx="18.50" cy="12.00" r=".95" fill="#7099cb"/><circle cx="16.60" cy="16.60" r=".95" fill="#7099cb"/><circle cx="12.00" cy="18.50" r=".95" fill="#7099cb"/><circle cx="7.40" cy="16.60" r=".95" fill="#7099cb"/><circle cx="5.50" cy="12.00" r=".95" fill="#7099cb"/><circle cx="7.40" cy="7.40" r=".95" fill="#7099cb"/><circle cx="12.00" cy="5.50" r=".95" fill="#7099cb"/><circle cx="16.60" cy="7.40" r=".95" fill="#7099cb"/></svg>
<svg style="position:absolute;left:860px;top:553.1px;overflow:visible" width="24" height="24" viewBox="0 0 24 24"><path d="M15.93 10.83 L19.22 10.90 L19.22 13.10 L15.93 13.17 L15.61 13.95 L17.88 16.33 L16.33 17.88 L13.95 15.61 L13.17 15.93 L13.10 19.22 L10.90 19.22 L10.83 15.93 L10.05 15.61 L7.67 17.88 L6.12 16.33 L8.39 13.95 L8.07 13.17 L4.78 13.10 L4.78 10.90 L8.07 10.83 L8.39 10.05 L6.12 7.67 L7.67 6.12 L10.05 8.39 L10.83 8.07 L10.90 4.78 L13.10 4.78 L13.17 8.07 L13.95 8.39 L16.33 6.12 L17.88 7.67 L15.61 10.05ZM13.15 12.00A1.15 1.15 0 1 0 10.85 12.00A1.15 1.15 0 1 0 13.15 12.00Z" fill="#8fb0da" stroke="#8fb0da" stroke-width=".4" stroke-linejoin="round" fill-rule="evenodd"/><circle cx="18.50" cy="12.00" r=".95" fill="#7099cb"/><circle cx="16.60" cy="16.60" r=".95" fill="#7099cb"/><circle cx="12.00" cy="18.50" r=".95" fill="#7099cb"/><circle cx="7.40" cy="16.60" r=".95" fill="#7099cb"/><circle cx="5.50" cy="12.00" r=".95" fill="#7099cb"/><circle cx="7.40" cy="7.40" r=".95" fill="#7099cb"/><circle cx="12.00" cy="5.50" r=".95" fill="#7099cb"/><circle cx="16.60" cy="7.40" r=".95" fill="#7099cb"/></svg>
<svg style="position:absolute;left:860px;top:575.1px;overflow:visible" width="24" height="24" viewBox="0 0 24 24"><path d="M15.93 10.83 L19.22 10.90 L19.22 13.10 L15.93 13.17 L15.61 13.95 L17.88 16.33 L16.33 17.88 L13.95 15.61 L13.17 15.93 L13.10 19.22 L10.90 19.22 L10.83 15.93 L10.05 15.61 L7.67 17.88 L6.12 16.33 L8.39 13.95 L8.07 13.17 L4.78 13.10 L4.78 10.90 L8.07 10.83 L8.39 10.05 L6.12 7.67 L7.67 6.12 L10.05 8.39 L10.83 8.07 L10.90 4.78 L13.10 4.78 L13.17 8.07 L13.95 8.39 L16.33 6.12 L17.88 7.67 L15.61 10.05ZM13.15 12.00A1.15 1.15 0 1 0 10.85 12.00A1.15 1.15 0 1 0 13.15 12.00Z" fill="#8fb0da" stroke="#8fb0da" stroke-width=".4" stroke-linejoin="round" fill-rule="evenodd"/><circle cx="18.50" cy="12.00" r=".95" fill="#7099cb"/><circle cx="16.60" cy="16.60" r=".95" fill="#7099cb"/><circle cx="12.00" cy="18.50" r=".95" fill="#7099cb"/><circle cx="7.40" cy="16.60" r=".95" fill="#7099cb"/><circle cx="5.50" cy="12.00" r=".95" fill="#7099cb"/><circle cx="7.40" cy="7.40" r=".95" fill="#7099cb"/><circle cx="12.00" cy="5.50" r=".95" fill="#7099cb"/><circle cx="16.60" cy="7.40" r=".95" fill="#7099cb"/></svg>
<svg style="position:absolute;left:860px;top:598px;overflow:visible" width="24" height="24" viewBox="0 0 24 24"><path d="M5.500 7.500l1.600-2 1.500 2.500 1.600-3 1.500 3 1.600-2.600 1.600 2.400 1.600-2.800 1.600 2.500" fill="none" stroke="#555" stroke-width=".8"/><path d="M5.500 12.500l2.400-1.700 2.400 2 3-2.500 2.500 2.300 2.700-1.800" fill="none" stroke="#444" stroke-width=".9"/><path d="M5.500 17.300c2-1.300 4-.9 6.200-.3 2.300.7 4.400.6 6.800-.4" fill="none" stroke="#333" stroke-width=".9"/></svg>
<svg style="position:absolute;left:860px;top:619.1px;overflow:visible" width="24" height="24" viewBox="0 0 24 24"><path d="M15.93 10.83 L19.22 10.90 L19.22 13.10 L15.93 13.17 L15.61 13.95 L17.88 16.33 L16.33 17.88 L13.95 15.61 L13.17 15.93 L13.10 19.22 L10.90 19.22 L10.83 15.93 L10.05 15.61 L7.67 17.88 L6.12 16.33 L8.39 13.95 L8.07 13.17 L4.78 13.10 L4.78 10.90 L8.07 10.83 L8.39 10.05 L6.12 7.67 L7.67 6.12 L10.05 8.39 L10.83 8.07 L10.90 4.78 L13.10 4.78 L13.17 8.07 L13.95 8.39 L16.33 6.12 L17.88 7.67 L15.61 10.05Z" fill="none" stroke="#7db8de" stroke-width=".9"/><circle cx="12" cy="12" r="1.800" fill="none" stroke="#7db8de" stroke-width=".8"/></svg>
<svg style="position:absolute;left:860px;top:641.1px;overflow:visible" width="24" height="24" viewBox="0 0 24 24"><path d="M15.93 10.83 L19.22 10.90 L19.22 13.10 L15.93 13.17 L15.61 13.95 L17.88 16.33 L16.33 17.88 L13.95 15.61 L13.17 15.93 L13.10 19.22 L10.90 19.22 L10.83 15.93 L10.05 15.61 L7.67 17.88 L6.12 16.33 L8.39 13.95 L8.07 13.17 L4.78 13.10 L4.78 10.90 L8.07 10.83 L8.39 10.05 L6.12 7.67 L7.67 6.12 L10.05 8.39 L10.83 8.07 L10.90 4.78 L13.10 4.78 L13.17 8.07 L13.95 8.39 L16.33 6.12 L17.88 7.67 L15.61 10.05ZM13.15 12.00A1.15 1.15 0 1 0 10.85 12.00A1.15 1.15 0 1 0 13.15 12.00Z" fill="#8fb0da" stroke="#8fb0da" stroke-width=".4" stroke-linejoin="round" fill-rule="evenodd"/><circle cx="18.50" cy="12.00" r=".95" fill="#7099cb"/><circle cx="16.60" cy="16.60" r=".95" fill="#7099cb"/><circle cx="12.00" cy="18.50" r=".95" fill="#7099cb"/><circle cx="7.40" cy="16.60" r=".95" fill="#7099cb"/><circle cx="5.50" cy="12.00" r=".95" fill="#7099cb"/><circle cx="7.40" cy="7.40" r=".95" fill="#7099cb"/><circle cx="12.00" cy="5.50" r=".95" fill="#7099cb"/><circle cx="16.60" cy="7.40" r=".95" fill="#7099cb"/></svg>
<svg style="position:absolute;left:860px;top:663.1px;overflow:visible" width="24" height="24" viewBox="0 0 24 24"><path d="M15.93 10.83 L19.22 10.90 L19.22 13.10 L15.93 13.17 L15.61 13.95 L17.88 16.33 L16.33 17.88 L13.95 15.61 L13.17 15.93 L13.10 19.22 L10.90 19.22 L10.83 15.93 L10.05 15.61 L7.67 17.88 L6.12 16.33 L8.39 13.95 L8.07 13.17 L4.78 13.10 L4.78 10.90 L8.07 10.83 L8.39 10.05 L6.12 7.67 L7.67 6.12 L10.05 8.39 L10.83 8.07 L10.90 4.78 L13.10 4.78 L13.17 8.07 L13.95 8.39 L16.33 6.12 L17.88 7.67 L15.61 10.05ZM13.15 12.00A1.15 1.15 0 1 0 10.85 12.00A1.15 1.15 0 1 0 13.15 12.00Z" fill="#8fb0da" stroke="#8fb0da" stroke-width=".4" stroke-linejoin="round" fill-rule="evenodd"/><circle cx="18.50" cy="12.00" r=".95" fill="#7099cb"/><circle cx="16.60" cy="16.60" r=".95" fill="#7099cb"/><circle cx="12.00" cy="18.50" r=".95" fill="#7099cb"/><circle cx="7.40" cy="16.60" r=".95" fill="#7099cb"/><circle cx="5.50" cy="12.00" r=".95" fill="#7099cb"/><circle cx="7.40" cy="7.40" r=".95" fill="#7099cb"/><circle cx="12.00" cy="5.50" r=".95" fill="#7099cb"/><circle cx="16.60" cy="7.40" r=".95" fill="#7099cb"/></svg>
<svg style="position:absolute;left:440px;top:729px" width="18" height="19" viewBox="0 0 18 19"><g transform="rotate(-32 8.500 9.500)"><rect x="4.300" y="1.600" width="8.600" height="15.600" rx="4.200" fill="#fff" stroke="#111" stroke-width="1.400"/><path d="M4.300 8.200h8.600M8.600 1.600v6.600M6.400 2.600v4.600M10.800 2.600v4.600" stroke="#111" stroke-width="1.100"/><circle cx="8.600" cy="12.600" r="2.300" fill="#fff" stroke="#111" stroke-width="1"/><circle cx="8.600" cy="12.600" r=".7" fill="#111"/></g><path d="M12.300 3.800l2.600-1.800M1.200 11.300l1.600.6" stroke="#222" stroke-width=".9"/></svg>
<svg style="position:absolute;left:589px;top:730px" width="16" height="18" viewBox="0 0 16 18"><path d="M4.200 10V6.200a3.900 3.900 0 0 1 7.800 0V10" fill="none" stroke="#868684" stroke-width="2.600"/><path d="M4.200 10V6.200a3.900 3.900 0 0 1 7.800 0V10" fill="none" stroke="#f4f4f3" stroke-width="1.100"/><rect x="2.100" y="9.300" width="11.900" height="7.400" rx="1.600" fill="#636361"/></svg>
<svg style="position:absolute;left:984px;top:732px" width="18" height="16" viewBox="0 0 18 16"><g fill="none" stroke="#7c7c7a" stroke-width=".9"><path d="M9 .9L1 7.300h16z" fill="#e3e3e2"/><path d="M2.500 8.300h13a6.500 6.500 0 0 1-13 0z" fill="#f6f6f5"/><path d="M4.600 4.600h8.800M2.800 6h12.400M6.600 2.900h4.800M3.300 10.600h11.400M5 12.800h8M9 .9v13.900M9 .9L4.800 7.300M9 .9l4.200 6.400M5.600 8.300q.6 4.500 3.400 6.500M12.400 8.300q-.6 4.500-3.400 6.500"/></g></svg>
<svg style="position:absolute;left:1099px;top:732px" width="18" height="17" viewBox="0 0 18 17"><path d="M8.900 1C4.400 1 .9 3.800.9 7.300s3.500 6.300 8 6.300c.5 0 1 0 1.500-.1 1.200 1.400 3 2.300 5.600 2.300-1.500-.8-2.300-1.900-2.500-3.300 2.100-1.100 3.400-3 3.400-5.200C16.900 3.800 13.400 1 8.900 1z" fill="#656563"/><circle cx="5" cy="7.400" r="1.100" fill="#fff"/><circle cx="8.900" cy="7.400" r="1.100" fill="#fff"/><circle cx="12.800" cy="7.400" r="1.100" fill="#fff"/></svg>
<div style="position:absolute;left:8px;top:39px;width:1136px;height:717px;border:1px solid rgba(255,236,228,.85);border-top:none;pointer-events:none"></div>
<div style="position:absolute;left:973px;top:692px;width:172px;height:1px;background:#b9b8b4"></div>
<svg style="position:absolute;left:0;top:0" width="1157" height="771" viewBox="0 0 1157 771" shape-rendering="crispEdges"><rect x="818" y="427" width="1" height="1" fill="#fff" fill-opacity=".85"/><rect x="817" y="426" width="1" height="1" fill="#a9a9a7"/><rect x="818" y="430" width="1" height="1" fill="#fff" fill-opacity=".85"/><rect x="817" y="429" width="1" height="1" fill="#a9a9a7"/><rect x="818" y="433" width="1" height="1" fill="#fff" fill-opacity=".85"/><rect x="817" y="432" width="1" height="1" fill="#a9a9a7"/><rect x="818" y="436" width="1" height="1" fill="#fff" fill-opacity=".85"/><rect x="817" y="435" width="1" height="1" fill="#a9a9a7"/><rect x="818" y="439" width="1" height="1" fill="#fff" fill-opacity=".85"/><rect x="817" y="438" width="1" height="1" fill="#a9a9a7"/><rect x="818" y="442" width="1" height="1" fill="#fff" fill-opacity=".85"/><rect x="817" y="441" width="1" height="1" fill="#a9a9a7"/></svg>
<span class="t" style="left:453.3px;top:9.87px;font-size:14.8px;color:#959592;transform:scaleX(0.9831);font-weight:bold;">*Untitled Project - QGIS a8eba57812</span>
<span class="t" style="left:17.6px;top:40.66px;font-size:15.4px;color:#1b1b1b;transform:scaleX(0.9769);">Pro<u>j</u>ect</span>
<span class="t" style="left:79.3px;top:40.66px;font-size:15.4px;color:#1b1b1b;transform:scaleX(0.9724);"><u>E</u>dit</span>
<span class="t" style="left:119.39999999999999px;top:40.66px;font-size:15.4px;color:#1b1b1b;transform:scaleX(0.9911);"><u>V</u>iew</span>
<span class="t" style="left:165.70000000000002px;top:40.66px;font-size:15.4px;color:#1b1b1b;transform:scaleX(0.9295);"><u>L</u>ayer</span>
<span class="t" style="left:215.5px;top:40.66px;font-size:15.4px;color:#1b1b1b;transform:scaleX(0.9762);"><u>S</u>ettings</span>
<span class="t" style="left:283.8px;top:40.66px;font-size:15.4px;color:#1b1b1b;transform:scaleX(0.9211);"><u>P</u>lugins</span>
<span class="t" style="left:345.2px;top:40.66px;font-size:15.4px;color:#1b1b1b;transform:scaleX(1.0056);">Vect<u>o</u>r</span>
<span class="t" style="left:404.3px;top:40.66px;font-size:15.4px;color:#1b1b1b;transform:scaleX(0.9196);"><u>R</u>aster</span>
<span class="t" style="left:460.8px;top:40.66px;font-size:15.4px;color:#1b1b1b;transform:scaleX(0.9180);"><u>D</u>atabase</span>
<span class="t" style="left:535.1999999999999px;top:40.66px;font-size:15.4px;color:#1b1b1b;transform:scaleX(1.0008);"><u>W</u>eb</span>
<span class="t" style="left:580.5px;top:40.66px;font-size:15.4px;color:#1b1b1b;transform:scaleX(0.9310);">Pro<u>c</u>essing</span>
<span class="t" style="left:665.8px;top:40.66px;font-size:15.4px;color:#1b1b1b;transform:scaleX(0.9756);"><u>H</u>elp</span>
<span class="t" style="left:711.4px;top:40.66px;font-size:15.4px;color:#1b1b1b;transform:scaleX(1.0105);">Vector</span>
<span class="t" style="left:823.4px;top:142.66px;font-size:15.4px;color:#1b1b1b;transform:scaleX(0.9641);">Processing Toolbox</span>
<span class="t" style="left:848.3px;top:198.66px;font-size:15.4px;color:#aaaaa7;transform:scaleX(0.8637);font-style:italic;">Search...</span>
<span class="t" style="left:866.0px;top:224.66px;font-size:15.4px;color:#1b1b1b;transform:scaleX(0.9310);">Recently used</span>
<span class="t" style="left:866.0px;top:246.66px;font-size:15.4px;color:#1b1b1b;transform:scaleX(0.9750);">Vector creation</span>
<span class="t" style="left:866.0px;top:268.66px;font-size:15.4px;color:#1b1b1b;transform:scaleX(0.9652);">Vector general</span>
<span class="t" style="left:866.0px;top:290.66px;font-size:15.4px;color:#1b1b1b;transform:scaleX(0.9859);">Vector geometry</span>
<span class="t" style="left:885.8px;top:312.66px;font-size:15.4px;color:#1b1b1b;transform:scaleX(0.9448);">Bounding boxes</span>
<span class="t" style="left:885.8px;top:334.66px;font-size:15.4px;color:#1b1b1b;transform:scaleX(0.9475);">Convex hull</span>
<span class="t" style="left:885.8px;top:356.66px;font-size:15.4px;color:#1b1b1b;transform:scaleX(0.9607);">Delete holes</span>
<span class="t" style="left:885.8px;top:378.66px;font-size:15.4px;color:#1b1b1b;transform:scaleX(0.9676);">Densify by count</span>
<span class="t" style="left:885.8px;top:400.66px;font-size:15.4px;color:#1b1b1b;transform:scaleX(0.9638);">Densify by interval</span>
<span class="t" style="left:885.8px;top:422.66px;font-size:15.4px;color:#1b1b1b;transform:scaleX(0.9541);">Fix geometries</span>
<span class="t" style="left:885.8px;top:444.66px;font-size:15.4px;color:#1b1b1b;transform:scaleX(0.9587);">Minimum enclosing circles</span>
<span class="t" style="left:885.8px;top:466.66px;font-size:15.4px;color:#1b1b1b;transform:scaleX(0.9857);">Multi-ring buffer (constant distance)</span>
<span class="t" style="left:885.8px;top:488.66px;font-size:15.4px;color:#1b1b1b;transform:scaleX(0.9900);">Multipart to singleparts</span>
<span class="t" style="left:885.8px;top:510.66px;font-size:15.4px;color:#1b1b1b;transform:scaleX(0.9666);">Oriented minimum bounding box</span>
<span class="t" style="left:885.8px;top:532.66px;font-size:15.4px;color:#1b1b1b;transform:scaleX(0.9736);">Orthogonalize</span>
<span class="t" style="left:885.8px;top:554.66px;font-size:15.4px;color:#1b1b1b;transform:scaleX(0.9457);">Remove duplicate vertices</span>
<span class="t" style="left:885.8px;top:576.66px;font-size:15.4px;color:#1b1b1b;transform:scaleX(0.9524);">Rotate</span>
<span class="t" style="left:885.8px;top:598.66px;font-size:15.4px;color:#1b1b1b;transform:scaleX(0.9782);">Simplify</span>
<span class="t" style="left:885.8px;top:620.66px;font-size:15.4px;color:#fff;transform:scaleX(0.9840);">Smooth</span>
<span class="t" style="left:885.8px;top:642.66px;font-size:15.4px;color:#1b1b1b;transform:scaleX(0.9716);">Snap points to grid</span>
<span class="t" style="left:885.8px;top:664.66px;font-size:15.4px;color:#1b1b1b;transform:scaleX(0.9363);">Subdivide</span>
<span class="t" style="left:832.0px;top:696.66px;font-size:15.4px;color:#1b1b1b;transform:scaleX(0.9678);">Processing Toolbox</span>
<span class="t" style="left:985.0999999999999px;top:695.66px;font-size:15.4px;color:#1b1b1b;transform:scaleX(0.9372);">Layer Styling</span>
<span class="t" style="left:40.199999999999996px;top:729.66px;font-size:15.4px;color:#777774;transform:scaleX(0.9964);">Type to locate (Ctrl+K)</span>
<span class="t" style="left:262.90000000000003px;top:729.66px;font-size:15.4px;color:#1b1b1b;transform:scaleX(1.0277);">6 f</span>
<span class="t" style="left:282.90000000000003px;top:729.66px;font-size:15.4px;color:#1b1b1b;transform:scaleX(0.9582);clip-path:inset(0 0 0 5.5px);">oordina</span>
<span class="t" style="left:354.5px;top:729.66px;font-size:15.4px;color:#1b1b1b;transform:scaleX(0.9706);">2.12,6.52</span>
<span class="t" style="left:465px;top:729.66px;font-size:15.4px;color:#1b1b1b;clip-path:inset(0 3.2px 0 5.2px);">ca</span>
<span class="t" style="left:484.5px;top:729.66px;font-size:15.4px;color:#1b1b1b;transform:scaleX(0.9854);">1:6983426</span>
<span class="t" style="left:617.1999999999999px;top:729.66px;font-size:15.4px;color:#1b1b1b;transform:scaleX(0.9566);">agnifi</span>
<span class="t" style="left:659.5px;top:729.66px;font-size:15.4px;color:#1b1b1b;transform:scaleX(0.9448);">100%</span>
<span class="t" style="left:759.3px;top:729.66px;font-size:15.4px;color:#1b1b1b;transform:scaleX(0.9023);clip-path:inset(0 1.5px 0 3px);">otatic</span>
<span class="t" style="left:804.6999999999999px;top:729.66px;font-size:15.4px;color:#1b1b1b;transform:scaleX(0.9488);">0.0 °</span>
<span class="t" style="left:920.0999999999999px;top:729.66px;font-size:15.4px;color:#1b1b1b;transform:scaleX(0.9132);">Render</span>
<span class="t" style="left:1005.0px;top:729.66px;font-size:15.4px;color:#1b1b1b;transform:scaleX(0.8992);">EPSG:4326</span>
</body></html>
